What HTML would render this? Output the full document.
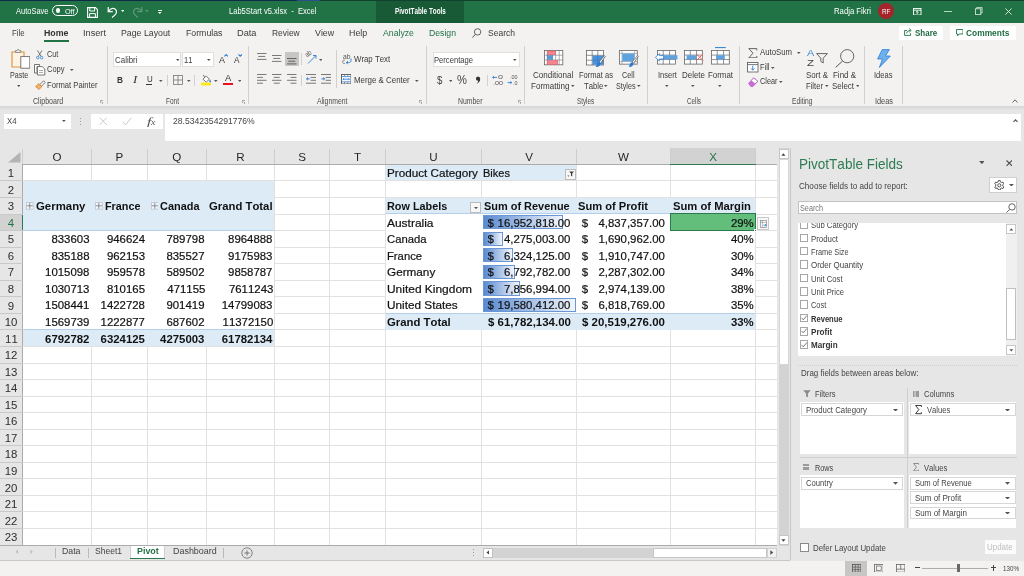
<!DOCTYPE html>
<html><head><meta charset="utf-8"><title>Excel</title>
<style>
html,body{margin:0;padding:0;}
body{width:1024px;height:576px;overflow:hidden;background:#e6e6e6;font-family:"Liberation Sans",sans-serif;position:relative;font-kerning:none;}
#r{position:absolute;left:0;top:0;width:1024px;height:576px;overflow:hidden;will-change:transform;}
#r div,#r svg{position:absolute;box-sizing:border-box;}
#r .t{white-space:pre;}
</style></head><body><div id="r">
<div style="left:22.5px;top:164.4px;width:754px;height:380.65px;background:#fff;"></div>
<div style="left:22.5px;top:180.45px;width:754px;height:1px;background:#e1e1e1;"></div>
<div style="left:22.5px;top:197px;width:754px;height:1px;background:#e1e1e1;"></div>
<div style="left:22.5px;top:213.55px;width:754px;height:1px;background:#e1e1e1;"></div>
<div style="left:22.5px;top:230.1px;width:754px;height:1px;background:#e1e1e1;"></div>
<div style="left:22.5px;top:246.65px;width:754px;height:1px;background:#e1e1e1;"></div>
<div style="left:22.5px;top:263.2px;width:754px;height:1px;background:#e1e1e1;"></div>
<div style="left:22.5px;top:279.75px;width:754px;height:1px;background:#e1e1e1;"></div>
<div style="left:22.5px;top:296.3px;width:754px;height:1px;background:#e1e1e1;"></div>
<div style="left:22.5px;top:312.85px;width:754px;height:1px;background:#e1e1e1;"></div>
<div style="left:22.5px;top:329.4px;width:754px;height:1px;background:#e1e1e1;"></div>
<div style="left:22.5px;top:345.95px;width:754px;height:1px;background:#e1e1e1;"></div>
<div style="left:22.5px;top:362.5px;width:754px;height:1px;background:#e1e1e1;"></div>
<div style="left:22.5px;top:379.05px;width:754px;height:1px;background:#e1e1e1;"></div>
<div style="left:22.5px;top:395.6px;width:754px;height:1px;background:#e1e1e1;"></div>
<div style="left:22.5px;top:412.15px;width:754px;height:1px;background:#e1e1e1;"></div>
<div style="left:22.5px;top:428.7px;width:754px;height:1px;background:#e1e1e1;"></div>
<div style="left:22.5px;top:445.25px;width:754px;height:1px;background:#e1e1e1;"></div>
<div style="left:22.5px;top:461.8px;width:754px;height:1px;background:#e1e1e1;"></div>
<div style="left:22.5px;top:478.35px;width:754px;height:1px;background:#e1e1e1;"></div>
<div style="left:22.5px;top:494.9px;width:754px;height:1px;background:#e1e1e1;"></div>
<div style="left:22.5px;top:511.45px;width:754px;height:1px;background:#e1e1e1;"></div>
<div style="left:22.5px;top:528px;width:754px;height:1px;background:#e1e1e1;"></div>
<div style="left:22.5px;top:544.55px;width:754px;height:1px;background:#e1e1e1;"></div>
<div style="left:91px;top:164.4px;width:1px;height:380.65px;background:#e1e1e1;"></div>
<div style="left:146.5px;top:164.4px;width:1px;height:380.65px;background:#e1e1e1;"></div>
<div style="left:206px;top:164.4px;width:1px;height:380.65px;background:#e1e1e1;"></div>
<div style="left:274px;top:164.4px;width:1px;height:380.65px;background:#e1e1e1;"></div>
<div style="left:329.25px;top:164.4px;width:1px;height:380.65px;background:#e1e1e1;"></div>
<div style="left:385px;top:164.4px;width:1px;height:380.65px;background:#e1e1e1;"></div>
<div style="left:481px;top:164.4px;width:1px;height:380.65px;background:#e1e1e1;"></div>
<div style="left:576px;top:164.4px;width:1px;height:380.65px;background:#e1e1e1;"></div>
<div style="left:669.75px;top:164.4px;width:1px;height:380.65px;background:#e1e1e1;"></div>
<div style="left:755.25px;top:164.4px;width:1px;height:380.65px;background:#e1e1e1;"></div>
<div style="left:23px;top:181.45px;width:251px;height:49.15px;background:#ddebf7;"></div>
<div style="left:23px;top:229.85px;width:251px;height:1px;background:#b4cfea;"></div>
<div style="left:23px;top:230.85px;width:251px;height:99.05px;background:#fff;"></div>
<div style="left:23px;top:329.9px;width:251px;height:16.55px;background:#ddebf7;"></div>
<div style="left:23px;top:329.4px;width:251px;height:1px;background:#b4cfea;"></div>
<div style="left:386px;top:164.9px;width:190px;height:15.55px;background:#ddebf7;"></div>
<div style="left:386px;top:198px;width:369.25px;height:16.05px;background:#ddebf7;"></div>
<div style="left:386px;top:213.3px;width:369.25px;height:1px;background:#b4cfea;"></div>
<div style="left:386px;top:214.3px;width:369.25px;height:99.05px;background:#fff;"></div>
<div style="left:386px;top:313.35px;width:369.25px;height:16.55px;background:#ddebf7;"></div>
<div style="left:386px;top:312.85px;width:369.25px;height:1px;background:#b4cfea;"></div>
<div style="left:0px;top:148px;width:776.5px;height:16.4px;background:#e6e6e6;"></div>
<div style="left:670.25px;top:148px;width:85.5px;height:16.4px;background:#d2d2d2;"></div>
<div style="left:670.25px;top:163.5px;width:85.5px;height:1.35px;background:#2a7a4d;"></div>
<div style="left:0px;top:163.9px;width:670.25px;height:1px;background:#ababab;"></div>
<div style="left:755.75px;top:163.9px;width:20.75px;height:1px;background:#ababab;"></div>
<div style="left:22px;top:149px;width:1px;height:15px;background:#cdcdcd;"></div>
<div style="left:91px;top:149px;width:1px;height:15px;background:#cdcdcd;"></div>
<div style="left:146.5px;top:149px;width:1px;height:15px;background:#cdcdcd;"></div>
<div style="left:206px;top:149px;width:1px;height:15px;background:#cdcdcd;"></div>
<div style="left:274px;top:149px;width:1px;height:15px;background:#cdcdcd;"></div>
<div style="left:329.25px;top:149px;width:1px;height:15px;background:#cdcdcd;"></div>
<div style="left:385px;top:149px;width:1px;height:15px;background:#cdcdcd;"></div>
<div style="left:481px;top:149px;width:1px;height:15px;background:#cdcdcd;"></div>
<div style="left:576px;top:149px;width:1px;height:15px;background:#cdcdcd;"></div>
<div style="left:669.75px;top:149px;width:1px;height:15px;background:#cdcdcd;"></div>
<div style="left:755.25px;top:149px;width:1px;height:15px;background:#cdcdcd;"></div>
<div class="t" style="top:148.8px;height:16px;line-height:16px;font-size:11.6px;color:#262626;left:52.49px;">O</div>
<div class="t" style="top:148.8px;height:16px;line-height:16px;font-size:11.6px;color:#262626;left:115.38px;">P</div>
<div class="t" style="top:148.8px;height:16px;line-height:16px;font-size:11.6px;color:#262626;left:172.24px;">Q</div>
<div class="t" style="top:148.8px;height:16px;line-height:16px;font-size:11.6px;color:#262626;left:236.31px;">R</div>
<div class="t" style="top:148.8px;height:16px;line-height:16px;font-size:11.6px;color:#262626;left:298.26px;">S</div>
<div class="t" style="top:148.8px;height:16px;line-height:16px;font-size:11.6px;color:#262626;left:354.08px;">T</div>
<div class="t" style="top:148.8px;height:16px;line-height:16px;font-size:11.6px;color:#262626;left:429.31px;">U</div>
<div class="t" style="top:148.8px;height:16px;line-height:16px;font-size:11.6px;color:#262626;left:525.13px;">V</div>
<div class="t" style="top:148.8px;height:16px;line-height:16px;font-size:11.6px;color:#262626;left:617.9px;">W</div>
<div class="t" style="top:148.8px;height:16px;line-height:16px;font-size:11.6px;color:#217346;left:709.13px;">X</div>
<svg style="left:8px;top:152px;" width="12.5" height="10.5" viewBox="0 0 12.5 10.5"><path d="M12.5 0V10.5H0Z" fill="#b4b4b4"/></svg>
<div style="left:0px;top:164.4px;width:22.5px;height:380.65px;background:#e6e6e6;"></div>
<div style="left:0px;top:214.05px;width:22.5px;height:16.55px;background:#d2d2d2;"></div>
<div style="left:22px;top:164.4px;width:1px;height:380.65px;background:#ababab;"></div>
<div style="left:21.6px;top:214.05px;width:1.2px;height:16.55px;background:#2a7a4d;"></div>
<div class="t" style="top:165.1px;height:16px;line-height:16px;font-size:11.4px;color:#2e2e2e;left:7.83px;">1</div>
<div style="left:0px;top:180.45px;width:22.5px;height:1px;background:#c9c9c9;"></div>
<div class="t" style="top:181.65px;height:16px;line-height:16px;font-size:11.4px;color:#2e2e2e;left:7.83px;">2</div>
<div style="left:0px;top:197px;width:22.5px;height:1px;background:#c9c9c9;"></div>
<div class="t" style="top:198.2px;height:16px;line-height:16px;font-size:11.4px;color:#2e2e2e;left:7.83px;">3</div>
<div style="left:0px;top:213.55px;width:22.5px;height:1px;background:#c9c9c9;"></div>
<div class="t" style="top:214.75px;height:16px;line-height:16px;font-size:11.4px;color:#217346;left:7.83px;">4</div>
<div style="left:0px;top:230.1px;width:22.5px;height:1px;background:#c9c9c9;"></div>
<div class="t" style="top:231.3px;height:16px;line-height:16px;font-size:11.4px;color:#2e2e2e;left:7.83px;">5</div>
<div style="left:0px;top:246.65px;width:22.5px;height:1px;background:#c9c9c9;"></div>
<div class="t" style="top:247.85px;height:16px;line-height:16px;font-size:11.4px;color:#2e2e2e;left:7.83px;">6</div>
<div style="left:0px;top:263.2px;width:22.5px;height:1px;background:#c9c9c9;"></div>
<div class="t" style="top:264.4px;height:16px;line-height:16px;font-size:11.4px;color:#2e2e2e;left:7.83px;">7</div>
<div style="left:0px;top:279.75px;width:22.5px;height:1px;background:#c9c9c9;"></div>
<div class="t" style="top:280.95px;height:16px;line-height:16px;font-size:11.4px;color:#2e2e2e;left:7.83px;">8</div>
<div style="left:0px;top:296.3px;width:22.5px;height:1px;background:#c9c9c9;"></div>
<div class="t" style="top:297.5px;height:16px;line-height:16px;font-size:11.4px;color:#2e2e2e;left:7.83px;">9</div>
<div style="left:0px;top:312.85px;width:22.5px;height:1px;background:#c9c9c9;"></div>
<div class="t" style="top:314.05px;height:16px;line-height:16px;font-size:11.4px;color:#2e2e2e;left:4.66px;">10</div>
<div style="left:0px;top:329.4px;width:22.5px;height:1px;background:#c9c9c9;"></div>
<div class="t" style="top:330.6px;height:16px;line-height:16px;font-size:11.4px;color:#2e2e2e;left:5.08px;">11</div>
<div style="left:0px;top:345.95px;width:22.5px;height:1px;background:#c9c9c9;"></div>
<div class="t" style="top:347.15px;height:16px;line-height:16px;font-size:11.4px;color:#2e2e2e;left:4.66px;">12</div>
<div style="left:0px;top:362.5px;width:22.5px;height:1px;background:#c9c9c9;"></div>
<div class="t" style="top:363.7px;height:16px;line-height:16px;font-size:11.4px;color:#2e2e2e;left:4.66px;">13</div>
<div style="left:0px;top:379.05px;width:22.5px;height:1px;background:#c9c9c9;"></div>
<div class="t" style="top:380.25px;height:16px;line-height:16px;font-size:11.4px;color:#2e2e2e;left:4.66px;">14</div>
<div style="left:0px;top:395.6px;width:22.5px;height:1px;background:#c9c9c9;"></div>
<div class="t" style="top:396.8px;height:16px;line-height:16px;font-size:11.4px;color:#2e2e2e;left:4.66px;">15</div>
<div style="left:0px;top:412.15px;width:22.5px;height:1px;background:#c9c9c9;"></div>
<div class="t" style="top:413.35px;height:16px;line-height:16px;font-size:11.4px;color:#2e2e2e;left:4.66px;">16</div>
<div style="left:0px;top:428.7px;width:22.5px;height:1px;background:#c9c9c9;"></div>
<div class="t" style="top:429.9px;height:16px;line-height:16px;font-size:11.4px;color:#2e2e2e;left:4.66px;">17</div>
<div style="left:0px;top:445.25px;width:22.5px;height:1px;background:#c9c9c9;"></div>
<div class="t" style="top:446.45px;height:16px;line-height:16px;font-size:11.4px;color:#2e2e2e;left:4.66px;">18</div>
<div style="left:0px;top:461.8px;width:22.5px;height:1px;background:#c9c9c9;"></div>
<div class="t" style="top:463px;height:16px;line-height:16px;font-size:11.4px;color:#2e2e2e;left:4.66px;">19</div>
<div style="left:0px;top:478.35px;width:22.5px;height:1px;background:#c9c9c9;"></div>
<div class="t" style="top:479.55px;height:16px;line-height:16px;font-size:11.4px;color:#2e2e2e;left:4.66px;">20</div>
<div style="left:0px;top:494.9px;width:22.5px;height:1px;background:#c9c9c9;"></div>
<div class="t" style="top:496.1px;height:16px;line-height:16px;font-size:11.4px;color:#2e2e2e;left:4.66px;">21</div>
<div style="left:0px;top:511.45px;width:22.5px;height:1px;background:#c9c9c9;"></div>
<div class="t" style="top:512.65px;height:16px;line-height:16px;font-size:11.4px;color:#2e2e2e;left:4.66px;">22</div>
<div style="left:0px;top:528px;width:22.5px;height:1px;background:#c9c9c9;"></div>
<div class="t" style="top:529.2px;height:16px;line-height:16px;font-size:11.4px;color:#2e2e2e;left:4.66px;">23</div>
<svg style="left:26.1px;top:202.4px;" width="7.6" height="7.6" viewBox="0 0 7.6 7.6"><rect x="0.4" y="0.4" width="6.8" height="6.8" fill="#f4f6f9" stroke="#bfc5cc" stroke-width="0.8"/><path d="M0.8 3.8H6.8M3.8 0.8V6.8" stroke="#7d838a" stroke-width="0.9"/></svg>
<svg style="left:95.1px;top:202.4px;" width="7.6" height="7.6" viewBox="0 0 7.6 7.6"><rect x="0.4" y="0.4" width="6.8" height="6.8" fill="#f4f6f9" stroke="#bfc5cc" stroke-width="0.8"/><path d="M0.8 3.8H6.8M3.8 0.8V6.8" stroke="#7d838a" stroke-width="0.9"/></svg>
<svg style="left:150.6px;top:202.4px;" width="7.6" height="7.6" viewBox="0 0 7.6 7.6"><rect x="0.4" y="0.4" width="6.8" height="6.8" fill="#f4f6f9" stroke="#bfc5cc" stroke-width="0.8"/><path d="M0.8 3.8H6.8M3.8 0.8V6.8" stroke="#7d838a" stroke-width="0.9"/></svg>
<div class="t" style="top:198.1px;height:16px;line-height:16px;font-size:11.4px;color:#111;font-weight:bold;left:35.5px;transform-origin:0 50%;transform:scaleX(1.0015);">Germany</div>
<div class="t" style="top:198.1px;height:16px;line-height:16px;font-size:11.4px;color:#111;font-weight:bold;left:104.5px;transform-origin:0 50%;transform:scaleX(0.9496);">France</div>
<div class="t" style="top:198.1px;height:16px;line-height:16px;font-size:11.4px;color:#111;font-weight:bold;left:160px;transform-origin:0 50%;transform:scaleX(0.9592);">Canada</div>
<div class="t" style="top:198.1px;height:16px;line-height:16px;font-size:11.4px;color:#111;font-weight:bold;left:208.75px;transform-origin:0 50%;transform:scaleX(0.9941);">Grand Total</div>
<div class="t" style="top:231.2px;height:16px;line-height:16px;font-size:11.4px;color:#111;left:51.46px;-webkit-text-stroke:0.2px #111;">833603</div>
<div class="t" style="top:231.2px;height:16px;line-height:16px;font-size:11.4px;color:#111;left:106.96px;-webkit-text-stroke:0.2px #111;">946624</div>
<div class="t" style="top:231.2px;height:16px;line-height:16px;font-size:11.4px;color:#111;left:166.46px;-webkit-text-stroke:0.2px #111;">789798</div>
<div class="t" style="top:231.2px;height:16px;line-height:16px;font-size:11.4px;color:#111;left:228.12px;-webkit-text-stroke:0.2px #111;">8964888</div>
<div class="t" style="top:247.75px;height:16px;line-height:16px;font-size:11.4px;color:#111;left:51.46px;-webkit-text-stroke:0.2px #111;">835188</div>
<div class="t" style="top:247.75px;height:16px;line-height:16px;font-size:11.4px;color:#111;left:106.96px;-webkit-text-stroke:0.2px #111;">962153</div>
<div class="t" style="top:247.75px;height:16px;line-height:16px;font-size:11.4px;color:#111;left:166.46px;-webkit-text-stroke:0.2px #111;">835527</div>
<div class="t" style="top:247.75px;height:16px;line-height:16px;font-size:11.4px;color:#111;left:228.12px;-webkit-text-stroke:0.2px #111;">9175983</div>
<div class="t" style="top:264.3px;height:16px;line-height:16px;font-size:11.4px;color:#111;left:45.12px;-webkit-text-stroke:0.2px #111;">1015098</div>
<div class="t" style="top:264.3px;height:16px;line-height:16px;font-size:11.4px;color:#111;left:106.96px;-webkit-text-stroke:0.2px #111;">959578</div>
<div class="t" style="top:264.3px;height:16px;line-height:16px;font-size:11.4px;color:#111;left:166.46px;-webkit-text-stroke:0.2px #111;">589502</div>
<div class="t" style="top:264.3px;height:16px;line-height:16px;font-size:11.4px;color:#111;left:228.12px;-webkit-text-stroke:0.2px #111;">9858787</div>
<div class="t" style="top:280.85px;height:16px;line-height:16px;font-size:11.4px;color:#111;left:45.12px;-webkit-text-stroke:0.2px #111;">1030713</div>
<div class="t" style="top:280.85px;height:16px;line-height:16px;font-size:11.4px;color:#111;left:106.96px;-webkit-text-stroke:0.2px #111;">810165</div>
<div class="t" style="top:280.85px;height:16px;line-height:16px;font-size:11.4px;color:#111;left:167.31px;-webkit-text-stroke:0.2px #111;">471155</div>
<div class="t" style="top:280.85px;height:16px;line-height:16px;font-size:11.4px;color:#111;left:228.96px;-webkit-text-stroke:0.2px #111;">7611243</div>
<div class="t" style="top:297.4px;height:16px;line-height:16px;font-size:11.4px;color:#111;left:45.12px;-webkit-text-stroke:0.2px #111;">1508441</div>
<div class="t" style="top:297.4px;height:16px;line-height:16px;font-size:11.4px;color:#111;left:100.62px;-webkit-text-stroke:0.2px #111;">1422728</div>
<div class="t" style="top:297.4px;height:16px;line-height:16px;font-size:11.4px;color:#111;left:166.46px;-webkit-text-stroke:0.2px #111;">901419</div>
<div class="t" style="top:297.4px;height:16px;line-height:16px;font-size:11.4px;color:#111;left:221.78px;-webkit-text-stroke:0.2px #111;">14799083</div>
<div class="t" style="top:313.95px;height:16px;line-height:16px;font-size:11.4px;color:#111;left:45.12px;-webkit-text-stroke:0.2px #111;">1569739</div>
<div class="t" style="top:313.95px;height:16px;line-height:16px;font-size:11.4px;color:#111;left:100.62px;-webkit-text-stroke:0.2px #111;">1222877</div>
<div class="t" style="top:313.95px;height:16px;line-height:16px;font-size:11.4px;color:#111;left:166.46px;-webkit-text-stroke:0.2px #111;">687602</div>
<div class="t" style="top:313.95px;height:16px;line-height:16px;font-size:11.4px;color:#111;left:222.62px;-webkit-text-stroke:0.2px #111;">11372150</div>
<div class="t" style="top:330.5px;height:16px;line-height:16px;font-size:11.4px;color:#111;font-weight:bold;left:45.12px;">6792782</div>
<div class="t" style="top:330.5px;height:16px;line-height:16px;font-size:11.4px;color:#111;font-weight:bold;left:100.62px;">6324125</div>
<div class="t" style="top:330.5px;height:16px;line-height:16px;font-size:11.4px;color:#111;font-weight:bold;left:160.12px;">4275003</div>
<div class="t" style="top:330.5px;height:16px;line-height:16px;font-size:11.4px;color:#111;font-weight:bold;left:221.78px;">61782134</div>
<div class="t" style="top:165px;height:16px;line-height:16px;font-size:11.4px;color:#111;left:386.8px;transform-origin:0 50%;transform:scaleX(1.0258);-webkit-text-stroke:0.2px #111;">Product Category</div>
<div class="t" style="top:165px;height:16px;line-height:16px;font-size:11.4px;color:#111;left:483.2px;transform-origin:0 50%;transform:scaleX(0.9685);-webkit-text-stroke:0.2px #111;">Bikes</div>
<div style="left:565px;top:169px;width:10.75px;height:11px;background:#f7f7f7;border:0.75px solid #bcbcbc;"></div>
<svg style="left:567px;top:171.2px;" width="7.5" height="6.5" viewBox="0 0 7.5 6.5"><path d="M2.2 0.4H7L5.2 2.6V5.6L4 4.8V2.6Z" fill="#3c3c3c"/><path d="M0.3 4.4H2.5L1.4 5.7Z" fill="#555"/></svg>
<div class="t" style="top:198.1px;height:16px;line-height:16px;font-size:11.4px;color:#111;font-weight:bold;left:386.8px;transform-origin:0 50%;transform:scaleX(0.9535);">Row Labels</div>
<div style="left:470.25px;top:201.9px;width:11px;height:11.1px;background:#f7f7f7;border:0.75px solid #bcbcbc;"></div>
<svg style="left:473.8px;top:206.5px;" width="4" height="2.2" viewBox="0 0 4 2.2"><path d="M0 0H4L2 2.2Z" fill="#555"/></svg>
<div class="t" style="top:198.1px;height:16px;line-height:16px;font-size:11.4px;color:#111;font-weight:bold;left:483.75px;transform-origin:0 50%;transform:scaleX(0.9600);">Sum of Revenue</div>
<div class="t" style="top:198.1px;height:16px;line-height:16px;font-size:11.4px;color:#111;font-weight:bold;left:578.25px;transform-origin:0 50%;transform:scaleX(0.9782);">Sum of Profit</div>
<div class="t" style="top:198.1px;height:16px;line-height:16px;font-size:11.4px;color:#111;font-weight:bold;left:672.5px;transform-origin:0 50%;transform:scaleX(0.9853);">Sum of Margin</div>
<div style="left:669.75px;top:213.45px;width:86.6px;height:17.55px;background:#63be7b;border:1.2px solid #2a7a4d;"></div>
<div style="left:754.25px;top:229.35px;width:3px;height:2.75px;background:#2a7a4d;border:0.6px solid #fff;"></div>
<div class="t" style="top:214.65px;height:16px;line-height:16px;font-size:11.4px;color:#111;left:386.9px;transform-origin:0 50%;transform:scaleX(1.0495);-webkit-text-stroke:0.2px #111;">Australia</div>
<div style="left:482.5px;top:215.05px;width:80.74px;height:14.25px;background:linear-gradient(90deg,#5a8ad0 0%,#7fa5dc 25%,#f2f6fc 100%);border:0.75px solid #6a96d6;"></div>
<div class="t" style="top:214.65px;height:16px;line-height:16px;font-size:11.4px;color:#111;left:487.5px;-webkit-text-stroke:0.2px #111;">$</div>
<div class="t" style="top:214.65px;height:16px;line-height:16px;font-size:11.4px;color:#111;left:497.6px;-webkit-text-stroke:0.2px #111;">16,952,818.00</div>
<div class="t" style="top:214.65px;height:16px;line-height:16px;font-size:11.4px;color:#111;left:581.75px;-webkit-text-stroke:0.2px #111;">$</div>
<div class="t" style="top:214.65px;height:16px;line-height:16px;font-size:11.4px;color:#111;left:598.44px;-webkit-text-stroke:0.2px #111;">4,837,357.00</div>
<div class="t" style="top:214.65px;height:16px;line-height:16px;font-size:11.4px;color:#111;left:730.93px;-webkit-text-stroke:0.2px #111;">29%</div>
<div class="t" style="top:231.2px;height:16px;line-height:16px;font-size:11.4px;color:#111;left:386.9px;transform-origin:0 50%;transform:scaleX(0.9904);-webkit-text-stroke:0.2px #111;">Canada</div>
<div style="left:482.5px;top:231.6px;width:20.36px;height:14.25px;background:linear-gradient(90deg,#5a8ad0 0%,#7fa5dc 25%,#f2f6fc 100%);border:0.75px solid #6a96d6;"></div>
<div class="t" style="top:231.2px;height:16px;line-height:16px;font-size:11.4px;color:#111;left:487.5px;-webkit-text-stroke:0.2px #111;">$</div>
<div class="t" style="top:231.2px;height:16px;line-height:16px;font-size:11.4px;color:#111;left:503.94px;-webkit-text-stroke:0.2px #111;">4,275,003.00</div>
<div class="t" style="top:231.2px;height:16px;line-height:16px;font-size:11.4px;color:#111;left:581.75px;-webkit-text-stroke:0.2px #111;">$</div>
<div class="t" style="top:231.2px;height:16px;line-height:16px;font-size:11.4px;color:#111;left:598.44px;-webkit-text-stroke:0.2px #111;">1,690,962.00</div>
<div class="t" style="top:231.2px;height:16px;line-height:16px;font-size:11.4px;color:#111;left:730.93px;-webkit-text-stroke:0.2px #111;">40%</div>
<div class="t" style="top:247.75px;height:16px;line-height:16px;font-size:11.4px;color:#111;left:386.9px;transform-origin:0 50%;transform:scaleX(0.9879);-webkit-text-stroke:0.2px #111;">France</div>
<div style="left:482.5px;top:248.15px;width:30.12px;height:14.25px;background:linear-gradient(90deg,#5a8ad0 0%,#7fa5dc 25%,#f2f6fc 100%);border:0.75px solid #6a96d6;"></div>
<div class="t" style="top:247.75px;height:16px;line-height:16px;font-size:11.4px;color:#111;left:487.5px;-webkit-text-stroke:0.2px #111;">$</div>
<div class="t" style="top:247.75px;height:16px;line-height:16px;font-size:11.4px;color:#111;left:503.94px;-webkit-text-stroke:0.2px #111;">6,324,125.00</div>
<div class="t" style="top:247.75px;height:16px;line-height:16px;font-size:11.4px;color:#111;left:581.75px;-webkit-text-stroke:0.2px #111;">$</div>
<div class="t" style="top:247.75px;height:16px;line-height:16px;font-size:11.4px;color:#111;left:598.44px;-webkit-text-stroke:0.2px #111;">1,910,747.00</div>
<div class="t" style="top:247.75px;height:16px;line-height:16px;font-size:11.4px;color:#111;left:730.93px;-webkit-text-stroke:0.2px #111;">30%</div>
<div class="t" style="top:264.3px;height:16px;line-height:16px;font-size:11.4px;color:#111;left:386.9px;transform-origin:0 50%;transform:scaleX(1.0303);-webkit-text-stroke:0.2px #111;">Germany</div>
<div style="left:482.5px;top:264.7px;width:32.35px;height:14.25px;background:linear-gradient(90deg,#5a8ad0 0%,#7fa5dc 25%,#f2f6fc 100%);border:0.75px solid #6a96d6;"></div>
<div class="t" style="top:264.3px;height:16px;line-height:16px;font-size:11.4px;color:#111;left:487.5px;-webkit-text-stroke:0.2px #111;">$</div>
<div class="t" style="top:264.3px;height:16px;line-height:16px;font-size:11.4px;color:#111;left:503.94px;-webkit-text-stroke:0.2px #111;">6,792,782.00</div>
<div class="t" style="top:264.3px;height:16px;line-height:16px;font-size:11.4px;color:#111;left:581.75px;-webkit-text-stroke:0.2px #111;">$</div>
<div class="t" style="top:264.3px;height:16px;line-height:16px;font-size:11.4px;color:#111;left:598.44px;-webkit-text-stroke:0.2px #111;">2,287,302.00</div>
<div class="t" style="top:264.3px;height:16px;line-height:16px;font-size:11.4px;color:#111;left:730.93px;-webkit-text-stroke:0.2px #111;">34%</div>
<div class="t" style="top:280.85px;height:16px;line-height:16px;font-size:11.4px;color:#111;left:386.9px;transform-origin:0 50%;transform:scaleX(1.0485);-webkit-text-stroke:0.2px #111;">United Kingdom</div>
<div style="left:482.5px;top:281.25px;width:37.42px;height:14.25px;background:linear-gradient(90deg,#5a8ad0 0%,#7fa5dc 25%,#f2f6fc 100%);border:0.75px solid #6a96d6;"></div>
<div class="t" style="top:280.85px;height:16px;line-height:16px;font-size:11.4px;color:#111;left:487.5px;-webkit-text-stroke:0.2px #111;">$</div>
<div class="t" style="top:280.85px;height:16px;line-height:16px;font-size:11.4px;color:#111;left:503.94px;-webkit-text-stroke:0.2px #111;">7,856,994.00</div>
<div class="t" style="top:280.85px;height:16px;line-height:16px;font-size:11.4px;color:#111;left:581.75px;-webkit-text-stroke:0.2px #111;">$</div>
<div class="t" style="top:280.85px;height:16px;line-height:16px;font-size:11.4px;color:#111;left:598.44px;-webkit-text-stroke:0.2px #111;">2,974,139.00</div>
<div class="t" style="top:280.85px;height:16px;line-height:16px;font-size:11.4px;color:#111;left:730.93px;-webkit-text-stroke:0.2px #111;">38%</div>
<div class="t" style="top:297.4px;height:16px;line-height:16px;font-size:11.4px;color:#111;left:386.9px;transform-origin:0 50%;transform:scaleX(1.0345);-webkit-text-stroke:0.2px #111;">United States</div>
<div style="left:482.5px;top:297.8px;width:93.25px;height:14.25px;background:linear-gradient(90deg,#5a8ad0 0%,#7fa5dc 25%,#f2f6fc 100%);border:0.75px solid #6a96d6;"></div>
<div class="t" style="top:297.4px;height:16px;line-height:16px;font-size:11.4px;color:#111;left:487.5px;-webkit-text-stroke:0.2px #111;">$</div>
<div class="t" style="top:297.4px;height:16px;line-height:16px;font-size:11.4px;color:#111;left:497.6px;-webkit-text-stroke:0.2px #111;">19,580,412.00</div>
<div class="t" style="top:297.4px;height:16px;line-height:16px;font-size:11.4px;color:#111;left:581.75px;-webkit-text-stroke:0.2px #111;">$</div>
<div class="t" style="top:297.4px;height:16px;line-height:16px;font-size:11.4px;color:#111;left:598.44px;-webkit-text-stroke:0.2px #111;">6,818,769.00</div>
<div class="t" style="top:297.4px;height:16px;line-height:16px;font-size:11.4px;color:#111;left:730.93px;-webkit-text-stroke:0.2px #111;">35%</div>
<div class="t" style="top:313.95px;height:16px;line-height:16px;font-size:11.4px;color:#111;font-weight:bold;left:386.8px;transform-origin:0 50%;transform:scaleX(0.9965);">Grand Total</div>
<div class="t" style="top:313.95px;height:16px;line-height:16px;font-size:11.4px;color:#111;font-weight:bold;left:487.5px;transform-origin:0 50%;transform:scaleX(1.0071);">$ 61,782,134.00</div>
<div class="t" style="top:313.95px;height:16px;line-height:16px;font-size:11.4px;color:#111;font-weight:bold;left:582px;transform-origin:0 50%;transform:scaleX(1.0071);">$ 20,519,276.00</div>
<div class="t" style="top:313.95px;height:16px;line-height:16px;font-size:11.4px;color:#111;font-weight:bold;left:730.93px;">33%</div>
<div style="left:757px;top:217.3px;width:12.2px;height:13px;background:#f8f8f8;border:0.75px solid #c8c8c8;"></div>
<svg style="left:759.6px;top:219.6px;" width="7.5" height="8.5" viewBox="0 0 7.5 8.5"><rect x="0.4" y="0.4" width="6" height="7" fill="#fff" stroke="#8c8c8c" stroke-width="0.7"/><path d="M0.4 2.4H6.4M2.4 0.4V7.4" stroke="#8c8c8c" stroke-width="0.6"/><path d="M3.4 5.2H6M5 4L6.2 5.2L5 6.4" stroke="#2b7cd3" stroke-width="0.8" fill="none"/></svg>
<div style="left:0px;top:0px;width:1024px;height:22.5px;background:#217346;"></div>
<div style="left:0px;top:0px;width:1024px;height:1.2px;background:linear-gradient(90deg,#0f2a44 0,#0f2a44 296px,#2c4f8e 298px,#2c4f8e 319px,#12402f 321px,#12402f 100%);"></div>
<div style="left:375.5px;top:1.25px;width:88.5px;height:21.25px;background:#185a36;"></div>
<div class="t" style="top:4.8px;height:13px;line-height:13px;font-size:9.2px;color:#fff;left:15.5px;transform-origin:0 50%;transform:scaleX(0.8146);">AutoSave</div>
<div style="left:52.2px;top:5.2px;width:25.5px;height:11.2px;background:transparent;border:1px solid #fff;border-radius:6px;"></div>
<div style="left:55.6px;top:8.4px;width:4.8px;height:4.8px;background:#fff;border-radius:3px;"></div>
<div class="t" style="top:5.5px;height:11px;line-height:11px;font-size:8px;color:#fff;left:64.5px;transform-origin:0 50%;transform:scaleX(0.9028);">Off</div>
<svg style="left:87px;top:6.5px;" width="11" height="11" viewBox="0 0 11 11"><path d="M0.6 0.6H8.4L10.4 2.6V10.4H0.6Z" fill="none" stroke="#fff" stroke-width="1.1"/><path d="M2.8 0.8V4H7.6V0.8M2.6 10.2V6.6H8.4V10.2" fill="none" stroke="#fff" stroke-width="1"/></svg>
<svg style="left:107px;top:5.5px;" width="11" height="12" viewBox="0 0 11 12"><path d="M1.2 1V5.6H5.8" fill="none" stroke="#fff" stroke-width="1.2"/><path d="M1.6 5.2C3.6 1.6 8 1.4 9.3 4.6C10.2 7.2 8 9.4 5 11.4" fill="none" stroke="#fff" stroke-width="1.2"/></svg>
<svg style="left:120.7px;top:9.8px;" width="3.6" height="2" viewBox="0 0 3.6 2"><path d="M0 0H3.6L1.8 2Z" fill="#fff"/></svg>
<svg style="left:132px;top:5.5px;" width="11" height="12" viewBox="0 0 11 12"><path d="M9.8 1V5.6H5.2" fill="none" stroke="#5f9a7c" stroke-width="1.2"/><path d="M9.4 5.2C7.4 1.6 3 1.4 1.7 4.6C0.8 7.2 3 9.4 6 11.4" fill="none" stroke="#5f9a7c" stroke-width="1.2"/></svg>
<svg style="left:145.2px;top:9.8px;" width="3.6" height="2" viewBox="0 0 3.6 2"><path d="M0 0H3.6L1.8 2Z" fill="#5f9a7c"/></svg>
<div style="left:158.25px;top:10px;width:3.6px;height:0.9px;background:#fff;"></div>
<svg style="left:158.2px;top:11.8px;" width="3.6" height="2" viewBox="0 0 3.6 2"><path d="M0 0H3.6L1.8 2Z" fill="#fff"/></svg>
<div class="t" style="top:4.8px;height:13px;line-height:13px;font-size:9.2px;color:#fff;left:228.5px;transform-origin:0 50%;transform:scaleX(0.8227);">Lab5Start v5.xlsx  -  Excel</div>
<div class="t" style="top:5.8px;height:11px;line-height:11px;font-size:8.2px;color:#fff;font-weight:bold;left:394.75px;transform-origin:0 50%;transform:scaleX(0.7765);">PivotTable Tools</div>
<div class="t" style="top:5px;height:13px;line-height:13px;font-size:9.2px;color:#fff;left:834px;transform-origin:0 50%;transform:scaleX(0.8416);">Radja Fikri</div>
<div style="left:878px;top:3px;width:16px;height:16px;background:#a4262c;border-radius:8px;"></div>
<div class="t" style="top:6.9px;height:9px;line-height:9px;font-size:6.6px;color:#fff;left:882px;transform-origin:0 50%;transform:scaleX(0.9661);">RF</div>
<svg style="left:913px;top:7.5px;" width="8.5" height="7.5" viewBox="0 0 8.5 7.5"><rect x="0.5" y="0.5" width="7.5" height="6.5" fill="none" stroke="#fff" stroke-width="0.9"/><path d="M0.5 2.2H8" stroke="#fff" stroke-width="0.9"/><path d="M4.25 6V3.2M2.9 4.4L4.25 3.1L5.6 4.4" stroke="#fff" stroke-width="0.8" fill="none"/></svg>
<div style="left:944px;top:10.7px;width:8px;height:0.8px;background:#b9d3c5;"></div>
<svg style="left:975px;top:7px;" width="7.5" height="8" viewBox="0 0 7.5 8"><rect x="0.4" y="1.8" width="5.4" height="5.6" fill="none" stroke="#e4efe9" stroke-width="0.8"/><path d="M1.8 1.8V0.4H7V6H5.8" fill="none" stroke="#e4efe9" stroke-width="0.8"/></svg>
<svg style="left:1005px;top:7.5px;" width="7" height="7" viewBox="0 0 7 7"><path d="M0.4 0.4L6.6 6.6M6.6 0.4L0.4 6.6" stroke="#e8f1ec" stroke-width="0.85"/></svg>
<div style="left:0px;top:22.5px;width:1024px;height:83.5px;background:#f3f2f1;"></div>
<div style="left:0px;top:106px;width:1024px;height:3.5px;background:linear-gradient(180deg,#d6d6d6,#e6e6e6);"></div>
<div class="t" style="top:26.3px;height:14px;line-height:14px;font-size:9.7px;color:#3b3b3b;left:11.5px;transform-origin:0 50%;transform:scaleX(0.7997);">File</div>
<div class="t" style="top:26.3px;height:14px;line-height:14px;font-size:9.7px;color:#333;font-weight:bold;left:44px;transform-origin:0 50%;transform:scaleX(0.9091);">Home</div>
<div style="left:44px;top:40px;width:25px;height:1.75px;background:#217346;"></div>
<div class="t" style="top:26.3px;height:14px;line-height:14px;font-size:9.7px;color:#3b3b3b;left:83px;transform-origin:0 50%;transform:scaleX(0.9481);">Insert</div>
<div class="t" style="top:26.3px;height:14px;line-height:14px;font-size:9.7px;color:#3b3b3b;left:121px;transform-origin:0 50%;transform:scaleX(0.9041);">Page Layout</div>
<div class="t" style="top:26.3px;height:14px;line-height:14px;font-size:9.7px;color:#3b3b3b;left:185.5px;transform-origin:0 50%;transform:scaleX(0.9029);">Formulas</div>
<div class="t" style="top:26.3px;height:14px;line-height:14px;font-size:9.7px;color:#3b3b3b;left:237px;transform-origin:0 50%;transform:scaleX(0.9517);">Data</div>
<div class="t" style="top:26.3px;height:14px;line-height:14px;font-size:9.7px;color:#3b3b3b;left:271.5px;transform-origin:0 50%;transform:scaleX(0.8725);">Review</div>
<div class="t" style="top:26.3px;height:14px;line-height:14px;font-size:9.7px;color:#3b3b3b;left:315px;transform-origin:0 50%;transform:scaleX(0.9113);">View</div>
<div class="t" style="top:26.3px;height:14px;line-height:14px;font-size:9.7px;color:#3b3b3b;left:349px;transform-origin:0 50%;transform:scaleX(0.9148);">Help</div>
<div class="t" style="top:26.3px;height:14px;line-height:14px;font-size:9.7px;color:#217346;left:383px;transform-origin:0 50%;transform:scaleX(0.8983);">Analyze</div>
<div class="t" style="top:26.3px;height:14px;line-height:14px;font-size:9.7px;color:#217346;left:429px;transform-origin:0 50%;transform:scaleX(0.8942);">Design</div>
<svg style="left:472px;top:28px;" width="9.5" height="10" viewBox="0 0 9.5 10"><circle cx="5.6" cy="3.9" r="3.2" fill="none" stroke="#555" stroke-width="0.9"/><path d="M3.4 6.3L0.5 9.5" stroke="#555" stroke-width="1"/></svg>
<div class="t" style="top:26.3px;height:14px;line-height:14px;font-size:9.7px;color:#3b3b3b;left:488px;transform-origin:0 50%;transform:scaleX(0.8785);">Search</div>
<div style="left:899px;top:25.5px;width:44px;height:14.5px;background:#fff;"></div>
<svg style="left:904px;top:28px;" width="8.5" height="8" viewBox="0 0 8.5 8"><path d="M3 2.5H0.6V7.4H6.6V5.2" fill="none" stroke="#217346" stroke-width="0.9"/><path d="M2.6 5.4C3 3.4 4.6 2.4 6.4 2.4M5.2 0.6L7.2 2.4L5.2 4.2" fill="none" stroke="#217346" stroke-width="0.9"/></svg>
<div class="t" style="top:26.4px;height:13px;line-height:13px;font-size:9.4px;color:#1e6b41;font-weight:bold;left:915px;transform-origin:0 50%;transform:scaleX(0.8517);">Share</div>
<div style="left:950px;top:25.5px;width:65.5px;height:14.5px;background:#fff;"></div>
<svg style="left:955.5px;top:28.5px;" width="7.5" height="7.5" viewBox="0 0 7.5 7.5"><path d="M0.5 0.5H7V5H3L1.6 6.8V5H0.5Z" fill="none" stroke="#217346" stroke-width="0.9"/></svg>
<div class="t" style="top:26.4px;height:13px;line-height:13px;font-size:9.4px;color:#1e6b41;font-weight:bold;left:966px;transform-origin:0 50%;transform:scaleX(0.8955);">Comments</div>
<div style="left:107.1px;top:46px;width:0.9px;height:57.5px;background:#d2d0ce;"></div>
<div style="left:248.1px;top:46px;width:0.9px;height:57.5px;background:#d2d0ce;"></div>
<div style="left:425.6px;top:46px;width:0.9px;height:57.5px;background:#d2d0ce;"></div>
<div style="left:524.1px;top:46px;width:0.9px;height:57.5px;background:#d2d0ce;"></div>
<div style="left:647.1px;top:46px;width:0.9px;height:57.5px;background:#d2d0ce;"></div>
<div style="left:739.1px;top:46px;width:0.9px;height:57.5px;background:#d2d0ce;"></div>
<div style="left:863.6px;top:46px;width:0.9px;height:57.5px;background:#d2d0ce;"></div>
<div style="left:901.85px;top:46px;width:0.9px;height:57.5px;background:#d2d0ce;"></div>
<div class="t" style="top:95.2px;height:12px;line-height:12px;font-size:8.4px;color:#4a4a4a;left:33px;transform-origin:0 50%;transform:scaleX(0.8413);">Clipboard</div>
<div class="t" style="top:95.2px;height:12px;line-height:12px;font-size:8.4px;color:#4a4a4a;left:166px;transform-origin:0 50%;transform:scaleX(0.7734);">Font</div>
<div class="t" style="top:95.2px;height:12px;line-height:12px;font-size:8.4px;color:#4a4a4a;left:317px;transform-origin:0 50%;transform:scaleX(0.8165);">Alignment</div>
<div class="t" style="top:95.2px;height:12px;line-height:12px;font-size:8.4px;color:#4a4a4a;left:457.5px;transform-origin:0 50%;transform:scaleX(0.8201);">Number</div>
<div class="t" style="top:95.2px;height:12px;line-height:12px;font-size:8.4px;color:#4a4a4a;left:577px;transform-origin:0 50%;transform:scaleX(0.7541);">Styles</div>
<div class="t" style="top:95.2px;height:12px;line-height:12px;font-size:8.4px;color:#4a4a4a;left:687px;transform-origin:0 50%;transform:scaleX(0.7498);">Cells</div>
<div class="t" style="top:95.2px;height:12px;line-height:12px;font-size:8.4px;color:#4a4a4a;left:792px;transform-origin:0 50%;transform:scaleX(0.7982);">Editing</div>
<div class="t" style="top:95.2px;height:12px;line-height:12px;font-size:8.4px;color:#4a4a4a;left:875px;transform-origin:0 50%;transform:scaleX(0.8760);">Ideas</div>
<svg style="left:99.5px;top:100px;" width="3.8" height="3.8" viewBox="0 0 3.8 3.8"><path d="M0.4 3V0.4H3M1.6 1.6L3.4 3.4M3.4 1.8V3.4H1.8" fill="none" stroke="#777" stroke-width="0.6"/></svg>
<svg style="left:241.5px;top:100px;" width="3.8" height="3.8" viewBox="0 0 3.8 3.8"><path d="M0.4 3V0.4H3M1.6 1.6L3.4 3.4M3.4 1.8V3.4H1.8" fill="none" stroke="#777" stroke-width="0.6"/></svg>
<svg style="left:418.5px;top:100px;" width="3.8" height="3.8" viewBox="0 0 3.8 3.8"><path d="M0.4 3V0.4H3M1.6 1.6L3.4 3.4M3.4 1.8V3.4H1.8" fill="none" stroke="#777" stroke-width="0.6"/></svg>
<svg style="left:517.5px;top:100px;" width="3.8" height="3.8" viewBox="0 0 3.8 3.8"><path d="M0.4 3V0.4H3M1.6 1.6L3.4 3.4M3.4 1.8V3.4H1.8" fill="none" stroke="#777" stroke-width="0.6"/></svg>
<svg style="left:1012px;top:98.5px;" width="6" height="4" viewBox="0 0 6 4"><path d="M0.5 3.5L3 0.8L5.5 3.5" fill="none" stroke="#666" stroke-width="1"/></svg>
<svg style="left:10.5px;top:48.5px;" width="19.5" height="20" viewBox="0 0 19.5 20"><path d="M1 3H13V18H1Z" fill="#fdf3e4" stroke="#e19642" stroke-width="1.2"/><path d="M4.5 3.4V1.6H6C6 0.2 8.4 0.2 8.4 1.6H9.8V3.4Z" fill="#f3f2f1" stroke="#777" stroke-width="0.8"/><rect x="9.8" y="7.6" width="9" height="11.6" fill="#fff" stroke="#6a6a6a" stroke-width="0.9"/></svg>
<div class="t" style="top:68.5px;height:13px;line-height:13px;font-size:9px;color:#3b3b3b;left:9.5px;transform-origin:0 50%;transform:scaleX(0.7930);">Paste</div>
<svg style="left:16.7px;top:84.8px;" width="3.6" height="2" viewBox="0 0 3.6 2"><path d="M0 0H3.6L1.8 2Z" fill="#555"/></svg>
<svg style="left:36px;top:50px;" width="7.5" height="9.5" viewBox="0 0 7.5 9.5"><path d="M1.4 0.4L5 6.2M6 0.4L2.4 6.2" stroke="#555" stroke-width="0.8" fill="none"/><circle cx="1.8" cy="7.6" r="1.3" fill="none" stroke="#2b7cd3" stroke-width="0.8"/><circle cx="5.6" cy="7.6" r="1.3" fill="none" stroke="#2b7cd3" stroke-width="0.8"/></svg>
<div class="t" style="top:47.8px;height:13px;line-height:13px;font-size:9px;color:#3b3b3b;left:47px;transform-origin:0 50%;transform:scaleX(0.8033);">Cut</div>
<svg style="left:34px;top:64px;" width="11.5" height="11.5" viewBox="0 0 11.5 11.5"><path d="M0.5 0.5H5.5V2.5H3V9H0.5Z" fill="#fff" stroke="#555" stroke-width="0.8"/><path d="M3.4 2.6H8.2L10.8 5V11H3.4Z" fill="#fff" stroke="#555" stroke-width="0.8"/><path d="M5 6.5H9M5 8.5H9" stroke="#777" stroke-width="0.6"/></svg>
<div class="t" style="top:63.3px;height:13px;line-height:13px;font-size:9px;color:#3b3b3b;left:47px;transform-origin:0 50%;transform:scaleX(0.8329);">Copy</div>
<svg style="left:70.2px;top:68.8px;" width="3.6" height="2" viewBox="0 0 3.6 2"><path d="M0 0H3.6L1.8 2Z" fill="#555"/></svg>
<svg style="left:34.5px;top:79.5px;" width="11" height="10" viewBox="0 0 11 10"><path d="M4.6 4.8L8.6 0.8L10.2 2.4L6.2 6.4Z" fill="#fff" stroke="#555" stroke-width="0.8"/><path d="M0.6 6.6L3.8 3.6L6.8 6.6L4 9.6Z" fill="#f2b26a" stroke="#d9822b" stroke-width="0.8"/></svg>
<div class="t" style="top:78.5px;height:13px;line-height:13px;font-size:9px;color:#3b3b3b;left:47px;transform-origin:0 50%;transform:scaleX(0.8485);">Format Painter</div>
<div style="left:112.5px;top:51.9px;width:68.75px;height:14.7px;background:#fff;border:0.75px solid #e1dfdd;"></div>
<div style="left:181.75px;top:51.9px;width:31.75px;height:14.7px;background:#fff;border:0.75px solid #e1dfdd;"></div>
<div class="t" style="top:53.8px;height:13px;line-height:13px;font-size:9px;color:#3b3b3b;left:114.5px;transform-origin:0 50%;transform:scaleX(0.8821);">Calibri</div>
<svg style="left:175.7px;top:58.8px;" width="3.6" height="2" viewBox="0 0 3.6 2"><path d="M0 0H3.6L1.8 2Z" fill="#555"/></svg>
<div class="t" style="top:53.8px;height:13px;line-height:13px;font-size:9px;color:#3b3b3b;left:184px;transform-origin:0 50%;transform:scaleX(0.8295);">11</div>
<svg style="left:207.2px;top:58.8px;" width="3.6" height="2" viewBox="0 0 3.6 2"><path d="M0 0H3.6L1.8 2Z" fill="#555"/></svg>
<div class="t" style="top:53.3px;height:13px;line-height:13px;font-size:9.4px;color:#3b3b3b;left:218.5px;transform-origin:0 50%;transform:scaleX(0.9570);">A</div>
<svg style="left:223.6px;top:54px;" width="4.4" height="2.8" viewBox="0 0 4.4 2.8"><path d="M0.4 2.4L2.2 0.6L4 2.4" fill="none" stroke="#2b7cd3" stroke-width="1.1"/></svg>
<div class="t" style="top:54.2px;height:12px;line-height:12px;font-size:8.6px;color:#3b3b3b;left:233.5px;transform-origin:0 50%;transform:scaleX(0.9588);">A</div>
<svg style="left:238px;top:54px;" width="4.4" height="2.8" viewBox="0 0 4.4 2.8"><path d="M0.4 0.4L2.2 2.2L4 0.4" fill="none" stroke="#2b7cd3" stroke-width="1.1"/></svg>
<div class="t" style="top:72.5px;height:14px;line-height:14px;font-size:9.8px;color:#333;font-weight:bold;left:117.3px;transform-origin:0 50%;transform:scaleX(0.8407);">B</div>
<div class="t" style="top:72.5px;height:14px;line-height:14px;font-size:9.8px;color:#333;font-style:italic;font-family:'Liberation Serif',serif;left:132.5px;transform-origin:0 50%;transform:scaleX(1.3023);">I</div>
<div class="t" style="top:72.7px;height:13px;line-height:13px;font-size:9.2px;color:#333;left:146.5px;transform-origin:0 50%;transform:scaleX(0.8654);">U</div>
<div style="left:146.3px;top:83.9px;width:6.2px;height:0.8px;background:#333;"></div>
<svg style="left:159.2px;top:79.5px;" width="3.6" height="2" viewBox="0 0 3.6 2"><path d="M0 0H3.6L1.8 2Z" fill="#555"/></svg>
<div style="left:167.3px;top:74.5px;width:0.8px;height:11.5px;background:#d2d0ce;"></div>
<svg style="left:172.5px;top:75px;" width="10" height="10" viewBox="0 0 10 10"><rect x="0.5" y="0.5" width="9" height="9" fill="none" stroke="#777" stroke-width="0.8"/><path d="M5 0.5V9.5M0.5 5H9.5" stroke="#777" stroke-width="0.8"/></svg>
<svg style="left:187.2px;top:79.5px;" width="3.6" height="2" viewBox="0 0 3.6 2"><path d="M0 0H3.6L1.8 2Z" fill="#555"/></svg>
<div style="left:194.3px;top:74.5px;width:0.8px;height:11.5px;background:#d2d0ce;"></div>
<svg style="left:200.5px;top:74px;" width="10.5" height="11.5" viewBox="0 0 10.5 11.5"><path d="M2 5.2L5.2 2L8.4 5.2L5.2 8.2Z" fill="#fff" stroke="#555" stroke-width="0.8"/><path d="M3.6 3.6L2.4 0.8" stroke="#555" stroke-width="0.8"/><path d="M9 5.4C9 5.4 10 6.8 10 7.4A0.9 0.9 0 0 1 8.2 7.4C8.2 6.8 9 5.4 9 5.4Z" fill="#2b7cd3"/><rect x="0" y="8.6" width="10.5" height="2.9" fill="#ffe81a"/></svg>
<svg style="left:214.2px;top:79.5px;" width="3.6" height="2" viewBox="0 0 3.6 2"><path d="M0 0H3.6L1.8 2Z" fill="#555"/></svg>
<div class="t" style="top:71.5px;height:13px;line-height:13px;font-size:9px;color:#333;left:225px;transform-origin:0 50%;transform:scaleX(1.0411);">A</div>
<div style="left:223px;top:82.6px;width:10.2px;height:2.9px;background:#e81123;"></div>
<svg style="left:237.7px;top:79.5px;" width="3.6" height="2" viewBox="0 0 3.6 2"><path d="M0 0H3.6L1.8 2Z" fill="#555"/></svg>
<div style="left:284.5px;top:51.5px;width:14.75px;height:14.75px;background:#c8c6c4;"></div>
<svg style="left:257px;top:52.9px;" width="9.5" height="9.85" viewBox="0 0 9.5 9.85"><path d="M0 0.5H9.5" stroke="#6a6a6a" stroke-width="0.9"/><path d="M1.25 3.45H8.25" stroke="#6a6a6a" stroke-width="0.9"/><path d="M0 6.4H9.5" stroke="#6a6a6a" stroke-width="0.9"/></svg>
<svg style="left:272px;top:55px;" width="9.5" height="9.85" viewBox="0 0 9.5 9.85"><path d="M0 0.5H9.5" stroke="#6a6a6a" stroke-width="0.9"/><path d="M1.25 3.45H8.25" stroke="#6a6a6a" stroke-width="0.9"/><path d="M0 6.4H9.5" stroke="#6a6a6a" stroke-width="0.9"/></svg>
<svg style="left:287px;top:57.9px;" width="9.5" height="9.1" viewBox="0 0 9.5 9.1"><path d="M0 0.5H9.5" stroke="#555" stroke-width="0.9"/><path d="M1.25 3.2H8.25" stroke="#555" stroke-width="0.9"/><path d="M0 5.9H9.5" stroke="#555" stroke-width="0.9"/></svg>
<div style="left:301.1px;top:52.75px;width:0.8px;height:12.5px;background:#d2d0ce;"></div>
<svg style="left:306px;top:52.5px;" width="11.5" height="12" viewBox="0 0 11.5 12"><path d="M2 10.5L10 2.5M10 2.5H7M10 2.5V5.5" fill="none" stroke="#2b7cd3" stroke-width="0.9"/></svg>
<div class="t" style="top:51.4px;height:10px;line-height:10px;font-size:7px;color:#555;left:305.8px;transform-origin:0 50%;transform:scaleX(0.7963);transform:rotate(-40deg) scaleX(0.8);">ab</div>
<svg style="left:318.7px;top:58.8px;" width="3.6" height="2" viewBox="0 0 3.6 2"><path d="M0 0H3.6L1.8 2Z" fill="#555"/></svg>
<div style="left:335.6px;top:49.5px;width:0.8px;height:38px;background:#d2d0ce;"></div>
<svg style="left:342px;top:53.5px;" width="10.5" height="11.5" viewBox="0 0 10.5 11.5"><path d="M9 4.6V6.6C9 8 8 8.6 6.4 8.6H4.4M5.8 7.2L4.2 8.6L5.8 10" fill="none" stroke="#2b7cd3" stroke-width="0.95"/><path d="M2.8 6.2C1.6 5.8 0.6 6.6 0.6 7.8C0.6 9.2 1.8 9.8 2.9 9.3" fill="none" stroke="#666" stroke-width="0.8"/></svg>
<div class="t" style="top:51.5px;height:9px;line-height:9px;font-size:6.4px;color:#555;left:343px;transform-origin:0 50%;transform:scaleX(1.0535);">ab</div>
<div class="t" style="top:53.1px;height:13px;line-height:13px;font-size:9px;color:#3b3b3b;left:353.75px;transform-origin:0 50%;transform:scaleX(0.8710);">Wrap Text</div>
<svg style="left:257px;top:74.1px;" width="9.5" height="12.6" viewBox="0 0 9.5 12.6"><path d="M0 0.5H9.5" stroke="#6a6a6a" stroke-width="0.9"/><path d="M0 3.4H6" stroke="#6a6a6a" stroke-width="0.9"/><path d="M0 6.3H9.5" stroke="#6a6a6a" stroke-width="0.9"/><path d="M0 9.2H6" stroke="#6a6a6a" stroke-width="0.9"/></svg>
<svg style="left:272px;top:74.1px;" width="9.5" height="12.6" viewBox="0 0 9.5 12.6"><path d="M0 0.5H9.5" stroke="#6a6a6a" stroke-width="0.9"/><path d="M1.75 3.4H7.75" stroke="#6a6a6a" stroke-width="0.9"/><path d="M0 6.3H9.5" stroke="#6a6a6a" stroke-width="0.9"/><path d="M1.75 9.2H7.75" stroke="#6a6a6a" stroke-width="0.9"/></svg>
<svg style="left:287px;top:74.1px;" width="9.5" height="12.6" viewBox="0 0 9.5 12.6"><path d="M0 0.5H9.5" stroke="#6a6a6a" stroke-width="0.9"/><path d="M3.5 3.4H9.5" stroke="#6a6a6a" stroke-width="0.9"/><path d="M0 6.3H9.5" stroke="#6a6a6a" stroke-width="0.9"/><path d="M3.5 9.2H9.5" stroke="#6a6a6a" stroke-width="0.9"/></svg>
<div style="left:301.1px;top:74.5px;width:0.8px;height:11.5px;background:#d2d0ce;"></div>
<svg style="left:306px;top:74.1px;" width="10" height="10.5" viewBox="0 0 10 10.5"><path d="M0 0.5H10M4.6 3.4H10M4.6 6.3H10M0 9.2H10" stroke="#6a6a6a" stroke-width="0.9"/><path d="M3.8 4.85H0.6M2 3.5L0.5 4.85L2 6.2" stroke="#2b7cd3" stroke-width="0.95" fill="none"/></svg>
<svg style="left:321px;top:74.1px;" width="10" height="10.5" viewBox="0 0 10 10.5"><path d="M0 0.5H10M4.6 3.4H10M4.6 6.3H10M0 9.2H10" stroke="#6a6a6a" stroke-width="0.9"/><path d="M0.4 4.85H3.6M2.2 3.5L3.7 4.85L2.2 6.2" stroke="#2b7cd3" stroke-width="0.95" fill="none"/></svg>
<svg style="left:340.9px;top:73.8px;" width="10.5" height="10.5" viewBox="0 0 10.5 10.5"><rect x="0.45" y="0.45" width="9.5" height="9.5" fill="#fff" stroke="#555" stroke-width="0.9"/><path d="M3.6 0.5V2.4M6.8 0.5V2.4M3.6 8V10M6.8 8V10" stroke="#666" stroke-width="0.7"/><path d="M0.9 2.6H9.5M0.9 7.8H9.5" stroke="#2b7cd3" stroke-width="0.8"/><path d="M2 5.2H8.4M3 4.2L2 5.2L3 6.2M7.4 4.2L8.4 5.2L7.4 6.2" stroke="#2b7cd3" stroke-width="0.85" fill="none"/></svg>
<div class="t" style="top:73.8px;height:13px;line-height:13px;font-size:9px;color:#3b3b3b;left:353.75px;transform-origin:0 50%;transform:scaleX(0.8776);">Merge &amp; Center</div>
<svg style="left:415.2px;top:79.5px;" width="3.6" height="2" viewBox="0 0 3.6 2"><path d="M0 0H3.6L1.8 2Z" fill="#555"/></svg>
<div style="left:432.5px;top:51.9px;width:87px;height:14.7px;background:#fff;border:0.75px solid #e1dfdd;"></div>
<div class="t" style="top:53.8px;height:13px;line-height:13px;font-size:9px;color:#3b3b3b;left:434px;transform-origin:0 50%;transform:scaleX(0.8472);">Percentage</div>
<svg style="left:513.2px;top:58.8px;" width="3.6" height="2" viewBox="0 0 3.6 2"><path d="M0 0H3.6L1.8 2Z" fill="#555"/></svg>
<div class="t" style="top:72px;height:16px;line-height:16px;font-size:11.4px;color:#444;left:436.5px;transform-origin:0 50%;transform:scaleX(0.8517);">$</div>
<svg style="left:448.7px;top:79.5px;" width="3.6" height="2" viewBox="0 0 3.6 2"><path d="M0 0H3.6L1.8 2Z" fill="#555"/></svg>
<div class="t" style="top:71px;height:18px;line-height:18px;font-size:12.8px;color:#444;left:457.3px;transform-origin:0 50%;transform:scaleX(0.8699);">%</div>
<svg style="left:475px;top:75.5px;" width="5.5" height="8.5" viewBox="0 0 5.5 8.5"><path d="M3 0.4A2.2 2.2 0 1 0 3.2 4.8C3.2 6.4 2.2 7.4 0.8 8C3.4 7.6 5.2 5.6 5.2 2.8A2.3 2.3 0 0 0 3 0.4Z" fill="#333"/></svg>
<div style="left:487.1px;top:74.5px;width:0.8px;height:11.5px;background:#d2d0ce;"></div>
<svg style="left:492px;top:75px;" width="10.5" height="10" viewBox="0 0 10.5 10"><path d="M5 2.4H0.8M2 1.2L0.6 2.4L2 3.6" stroke="#2b7cd3" stroke-width="0.9" fill="none"/></svg>
<div class="t" style="top:73.9px;height:7px;line-height:7px;font-size:5.2px;color:#555;left:497.5px;transform-origin:0 50%;transform:scaleX(1.7289);">0</div>
<div class="t" style="top:79.5px;height:7px;line-height:7px;font-size:5.2px;color:#555;left:492.5px;transform-origin:0 50%;transform:scaleX(1.3834);">.00</div>
<svg style="left:507px;top:75px;" width="10.5" height="10" viewBox="0 0 10.5 10"><path d="M0.6 7.6H4.6M3.4 6.4L4.8 7.6L3.4 8.8" stroke="#2b7cd3" stroke-width="0.9" fill="none"/></svg>
<div class="t" style="top:73.9px;height:7px;line-height:7px;font-size:5.2px;color:#555;left:510px;transform-origin:0 50%;transform:scaleX(1.0375);">.00</div>
<div class="t" style="top:79.5px;height:7px;line-height:7px;font-size:5.2px;color:#555;left:513px;transform-origin:0 50%;transform:scaleX(1.0377);">.0</div>
<svg style="left:544px;top:50px;" width="19.5" height="15.5" viewBox="0 0 19.5 15.5"><rect x="0.5" y="0.5" width="18.3" height="14.3" fill="#fff" stroke="#666" stroke-width="0.8"/><path d="M0.5 5.2H18.8M0.5 10H18.8M3.2 0.5V14.8M11.6 0.5V14.8M15.2 0.5V14.8" stroke="#777" stroke-width="0.6"/><rect x="3.4" y="1" width="8.2" height="3.8" fill="#f4858e" stroke="#e8505b" stroke-width="0.5"/><rect x="3.4" y="5.7" width="5.4" height="3.8" fill="#5b9bd5" stroke="#2b7cd3" stroke-width="0.5"/><rect x="3.4" y="10.5" width="10.4" height="3.8" fill="#f4858e" stroke="#e8505b" stroke-width="0.5"/></svg>
<div class="t" style="top:68.7px;height:13px;line-height:13px;font-size:9px;color:#3b3b3b;left:533px;transform-origin:0 50%;transform:scaleX(0.8938);">Conditional</div>
<div class="t" style="top:79.5px;height:13px;line-height:13px;font-size:9px;color:#3b3b3b;left:531px;transform-origin:0 50%;transform:scaleX(0.8951);">Formatting</div>
<svg style="left:571.4px;top:84.8px;" width="3.6" height="2" viewBox="0 0 3.6 2"><path d="M0 0H3.6L1.8 2Z" fill="#555"/></svg>
<svg style="left:586px;top:50px;" width="18" height="15.5" viewBox="0 0 18 15.5"><rect x="0.5" y="0.5" width="17" height="14.5" fill="#fff" stroke="#666" stroke-width="0.8"/><path d="M0.5 5.3H17.5M0.5 10.2H17.5M6.2 0.5V15M11.8 0.5V15" stroke="#666" stroke-width="0.7"/><rect x="6.6" y="5.7" width="10.6" height="9" fill="#2b7cd3" opacity="0.85"/></svg>
<svg style="left:595px;top:54.5px;" width="11" height="13" viewBox="0 0 11 13"><path d="M9.6 0.6L10.4 1.4L5.6 8.2L4 7Z" fill="#fff" stroke="#555" stroke-width="0.7"/><path d="M4 7L5.6 8.4C5.4 10.6 3.2 12.4 0.6 11.8C1.8 11 1.6 8 4 7Z" fill="#2b7cd3"/></svg>
<div class="t" style="top:68.7px;height:13px;line-height:13px;font-size:9px;color:#3b3b3b;left:578.5px;transform-origin:0 50%;transform:scaleX(0.8393);">Format as</div>
<div class="t" style="top:79.5px;height:13px;line-height:13px;font-size:9px;color:#3b3b3b;left:584px;transform-origin:0 50%;transform:scaleX(0.8598);">Table</div>
<svg style="left:604.2px;top:84.8px;" width="3.6" height="2" viewBox="0 0 3.6 2"><path d="M0 0H3.6L1.8 2Z" fill="#555"/></svg>
<svg style="left:619px;top:50.2px;" width="19" height="15" viewBox="0 0 19 15"><rect x="0.45" y="0.45" width="17.8" height="13.7" fill="#fff" stroke="#666" stroke-width="0.8"/><path d="M3 0.5V14M15.6 0.5V14M0.5 3.4H18.2M0.5 11.6H18.2" stroke="#888" stroke-width="0.6"/><rect x="3.2" y="3.6" width="12.2" height="7.8" fill="#5fa2e0"/></svg>
<svg style="left:627.5px;top:54.6px;" width="11" height="13" viewBox="0 0 11 13"><path d="M9.6 0.6L10.4 1.4L5.6 8.2L4 7Z" fill="#fff" stroke="#555" stroke-width="0.7"/><path d="M4 7L5.6 8.4C5.4 10.6 3.2 12.4 0.6 11.8C1.8 11 1.6 8 4 7Z" fill="#2b7cd3"/></svg>
<div class="t" style="top:68.7px;height:13px;line-height:13px;font-size:9px;color:#3b3b3b;left:622px;transform-origin:0 50%;transform:scaleX(0.8062);">Cell</div>
<div class="t" style="top:79.5px;height:13px;line-height:13px;font-size:9px;color:#3b3b3b;left:616px;transform-origin:0 50%;transform:scaleX(0.7956);">Styles</div>
<svg style="left:637.2px;top:84.8px;" width="3.6" height="2" viewBox="0 0 3.6 2"><path d="M0 0H3.6L1.8 2Z" fill="#555"/></svg>
<svg style="left:655.2px;top:50.2px;" width="23" height="15" viewBox="0 0 23 15"><g transform="translate(1.9,0)"><rect x="0.5" y="0.5" width="18" height="13.6" fill="#fff" stroke="#666" stroke-width="0.8"/><path d="M0.5 5.066666666666666H18.5M0.5 9.533333333333333H18.5M6.333333333333333 0.5V14.1M12.666666666666666 0.5V14.1" stroke="#666" stroke-width="0.7"/></g><rect x="6" y="5.2" width="16.4" height="4.2" fill="#5fa2e0"/><path d="M0.4 7.3L4.4 3.6V5.6H8.6V9H4.4V11Z" fill="#fff" stroke="#2b7cd3" stroke-width="0.8"/></svg>
<div class="t" style="top:68.7px;height:13px;line-height:13px;font-size:9px;color:#3b3b3b;left:657.5px;transform-origin:0 50%;transform:scaleX(0.8330);">Insert</div>
<svg style="left:665.2px;top:84.8px;" width="3.6" height="2" viewBox="0 0 3.6 2"><path d="M0 0H3.6L1.8 2Z" fill="#555"/></svg>
<svg style="left:684.1px;top:50.2px;" width="21" height="15" viewBox="0 0 21 15"><g><rect x="0.5" y="0.5" width="17.8" height="13.6" fill="#fff" stroke="#666" stroke-width="0.8"/><path d="M0.5 5.066666666666666H18.3M0.5 9.533333333333333H18.3M6.266666666666667 0.5V14.1M12.533333333333333 0.5V14.1" stroke="#666" stroke-width="0.7"/></g><rect x="2.6" y="5.2" width="9.6" height="4.2" fill="#5fa2e0"/><path d="M12.2 3.8L19.2 10.8M19.2 3.8L12.2 10.8" stroke="#ef6a5a" stroke-width="1"/></svg>
<div class="t" style="top:68.7px;height:13px;line-height:13px;font-size:9px;color:#3b3b3b;left:682px;transform-origin:0 50%;transform:scaleX(0.8841);">Delete</div>
<svg style="left:691.2px;top:84.8px;" width="3.6" height="2" viewBox="0 0 3.6 2"><path d="M0 0H3.6L1.8 2Z" fill="#555"/></svg>
<svg style="left:711.2px;top:47.2px;" width="19.5" height="18" viewBox="0 0 19.5 18"><path d="M4 0.6H14.8" stroke="#2b7cd3" stroke-width="1"/><g transform="translate(0,3)"><rect x="0.5" y="0.5" width="17.8" height="13.6" fill="#fff" stroke="#666" stroke-width="0.8"/><path d="M0.5 5.066666666666666H18.3M0.5 9.533333333333333H18.3M6.266666666666667 0.5V14.1M12.533333333333333 0.5V14.1" stroke="#666" stroke-width="0.7"/></g><rect x="5" y="8.2" width="8.8" height="4.2" fill="#5fa2e0"/></svg>
<div class="t" style="top:68.7px;height:13px;line-height:13px;font-size:9px;color:#3b3b3b;left:708px;transform-origin:0 50%;transform:scaleX(0.8771);">Format</div>
<svg style="left:718.2px;top:84.8px;" width="3.6" height="2" viewBox="0 0 3.6 2"><path d="M0 0H3.6L1.8 2Z" fill="#555"/></svg>
<svg style="left:748px;top:47.5px;" width="9.5" height="10.5" viewBox="0 0 9.5 10.5"><path d="M8.8 2.4V0.6H0.8L5 5.2L0.8 9.8H8.8V8" fill="none" stroke="#555" stroke-width="0.9"/></svg>
<div class="t" style="top:46.1px;height:13px;line-height:13px;font-size:9px;color:#3b3b3b;left:760px;transform-origin:0 50%;transform:scaleX(0.8644);">AutoSum</div>
<svg style="left:797.2px;top:52px;" width="3.6" height="2" viewBox="0 0 3.6 2"><path d="M0 0H3.6L1.8 2Z" fill="#555"/></svg>
<svg style="left:747px;top:62px;" width="11.5" height="10.5" viewBox="0 0 11.5 10.5"><rect x="0.5" y="0.5" width="10.5" height="9.5" fill="#fff" stroke="#555" stroke-width="0.8"/><path d="M0.5 2.6H11" stroke="#555" stroke-width="0.8"/><path d="M5.75 3.6V8M4 6.4L5.75 8.2L7.5 6.4" stroke="#2b7cd3" stroke-width="0.9" fill="none"/></svg>
<div class="t" style="top:60.7px;height:13px;line-height:13px;font-size:9px;color:#3b3b3b;left:760px;transform-origin:0 50%;transform:scaleX(0.8264);">Fill</div>
<svg style="left:771.2px;top:66.6px;" width="3.6" height="2" viewBox="0 0 3.6 2"><path d="M0 0H3.6L1.8 2Z" fill="#555"/></svg>
<svg style="left:747.5px;top:76.5px;" width="10.5" height="10" viewBox="0 0 10.5 10"><path d="M0.6 6.4L5.6 0.8L9.8 4.2L5 9.4H2.8Z" fill="#fff" stroke="#b04fc0" stroke-width="0.9"/><path d="M0.6 6.4L3.4 3.4L7.4 6.8L5 9.4H2.8Z" fill="#c76dd4"/></svg>
<div class="t" style="top:75.1px;height:13px;line-height:13px;font-size:9px;color:#3b3b3b;left:760px;transform-origin:0 50%;transform:scaleX(0.8137);">Clear</div>
<svg style="left:779.2px;top:81px;" width="3.6" height="2" viewBox="0 0 3.6 2"><path d="M0 0H3.6L1.8 2Z" fill="#555"/></svg>
<div class="t" style="top:46.4px;height:14px;line-height:14px;font-size:9.8px;color:#3a86d8;left:807px;transform-origin:0 50%;transform:scaleX(1.1015);">A</div>
<div class="t" style="top:55.8px;height:14px;line-height:14px;font-size:9.8px;color:#444;left:807px;transform-origin:0 50%;transform:scaleX(1.1693);">Z</div>
<svg style="left:815.5px;top:52.5px;" width="12" height="11" viewBox="0 0 12 11"><path d="M0.6 0.6H11.4L7.2 5.2V10L4.8 8.4V5.2Z" fill="none" stroke="#555" stroke-width="0.9"/></svg>
<div class="t" style="top:68.7px;height:13px;line-height:13px;font-size:9px;color:#3b3b3b;left:806px;transform-origin:0 50%;transform:scaleX(0.8797);">Sort &amp;</div>
<div class="t" style="top:79.5px;height:13px;line-height:13px;font-size:9px;color:#3b3b3b;left:806px;transform-origin:0 50%;transform:scaleX(0.8500);">Filter</div>
<svg style="left:825.2px;top:84.8px;" width="3.6" height="2" viewBox="0 0 3.6 2"><path d="M0 0H3.6L1.8 2Z" fill="#555"/></svg>
<svg style="left:835px;top:48.5px;" width="20" height="19" viewBox="0 0 20 19"><circle cx="12.2" cy="7.2" r="6.6" fill="none" stroke="#555" stroke-width="0.9"/><path d="M7.6 12L0.6 18.4" stroke="#555" stroke-width="1"/></svg>
<div class="t" style="top:68.7px;height:13px;line-height:13px;font-size:9px;color:#3b3b3b;left:833px;transform-origin:0 50%;transform:scaleX(0.8842);">Find &amp;</div>
<div class="t" style="top:79.5px;height:13px;line-height:13px;font-size:9px;color:#3b3b3b;left:832px;transform-origin:0 50%;transform:scaleX(0.8795);">Select</div>
<svg style="left:855.7px;top:84.8px;" width="3.6" height="2" viewBox="0 0 3.6 2"><path d="M0 0H3.6L1.8 2Z" fill="#555"/></svg>
<svg style="left:876px;top:48.5px;" width="15.5" height="19" viewBox="0 0 15.5 19"><path d="M6.2 0.6H13.4L9.4 7H14.4L3.4 18.4L6.4 10H1.6Z" fill="#6db0ee" stroke="#2b7cd3" stroke-width="0.8"/></svg>
<div class="t" style="top:68.7px;height:13px;line-height:13px;font-size:9px;color:#3b3b3b;left:874px;transform-origin:0 50%;transform:scaleX(0.8403);">Ideas</div>
<div style="left:3.5px;top:113.5px;width:67.25px;height:15px;background:#fff;"></div>
<div class="t" style="top:114.8px;height:13px;line-height:13px;font-size:9px;color:#444;left:7px;transform-origin:0 50%;transform:scaleX(0.8630);">X4</div>
<svg style="left:62.3px;top:120.3px;" width="3.8" height="2" viewBox="0 0 3.8 2"><path d="M0 0H3.8L1.9 2Z" fill="#555"/></svg>
<div style="left:80.2px;top:117.5px;width:1px;height:1.2px;background:#9a9a9a;"></div>
<div style="left:80.2px;top:120.5px;width:1px;height:1.2px;background:#9a9a9a;"></div>
<div style="left:80.2px;top:123.5px;width:1px;height:1.2px;background:#9a9a9a;"></div>
<div style="left:90.75px;top:113.5px;width:72.5px;height:15px;background:#fff;"></div>
<svg style="left:98.5px;top:117px;" width="8.5" height="8.5" viewBox="0 0 8.5 8.5"><path d="M0.6 0.6L7.9 7.9M7.9 0.6L0.6 7.9" stroke="#c4c4c4" stroke-width="0.9"/></svg>
<svg style="left:122px;top:117px;" width="10" height="8.5" viewBox="0 0 10 8.5"><path d="M0.6 4.6L3.6 7.8L9.4 0.6" fill="none" stroke="#c4c4c4" stroke-width="0.9"/></svg>
<div class="t" style="top:113.5px;height:15px;line-height:15px;font-size:11px;color:#555;font-style:italic;font-family:'Liberation Serif',serif;left:146.5px;transform-origin:0 50%;transform:scaleX(1.4725);">f</div>
<div class="t" style="top:117.6px;height:10px;line-height:10px;font-size:7.5px;color:#555;font-style:italic;font-family:'Liberation Serif',serif;left:150.6px;transform-origin:0 50%;transform:scaleX(1.3218);">x</div>
<div style="left:165.25px;top:113.5px;width:855.25px;height:27.75px;background:#fff;"></div>
<div class="t" style="top:115px;height:13px;line-height:13px;font-size:9px;color:#444;left:172.75px;transform-origin:0 50%;transform:scaleX(0.9552);">28.5342354291776%</div>
<svg style="left:1012.8px;top:119.2px;" width="5" height="3.4" viewBox="0 0 5 3.4"><path d="M0.5 3L2.5 0.8L4.5 3" fill="none" stroke="#555" stroke-width="1.1"/></svg>
<div style="left:0px;top:544.5px;width:777px;height:1.2px;background:#ababab;"></div>
<div style="left:0px;top:545.7px;width:777px;height:14.8px;background:#e6e6e6;"></div>
<div style="left:0px;top:560.5px;width:1024px;height:15.5px;background:#f3f2f1;"></div>
<div style="left:0px;top:560px;width:790px;height:0.9px;background:#c8c8c8;"></div>
<svg style="left:14.8px;top:548.8px;" width="3.4" height="5.6" viewBox="0 0 3.4 5.6"><path d="M3 0.4L0.6 2.8L3 5.2Z" fill="#c0c0c0"/></svg>
<svg style="left:29.6px;top:548.8px;" width="3.4" height="5.6" viewBox="0 0 3.4 5.6"><path d="M0.4 0.4L2.8 2.8L0.4 5.2Z" fill="#c0c0c0"/></svg>
<div style="left:54.6px;top:547.5px;width:0.9px;height:10px;background:#b9b9b9;"></div>
<div style="left:88.1px;top:547.5px;width:0.9px;height:10px;background:#b9b9b9;"></div>
<div style="left:222.6px;top:547.5px;width:0.9px;height:10px;background:#b9b9b9;"></div>
<div class="t" style="top:544.3px;height:13px;line-height:13px;font-size:9.6px;color:#444;left:62px;transform-origin:0 50%;transform:scaleX(0.9123);">Data</div>
<div class="t" style="top:544.3px;height:13px;line-height:13px;font-size:9.6px;color:#444;left:95px;transform-origin:0 50%;transform:scaleX(0.8874);">Sheet1</div>
<div style="left:130px;top:545.7px;width:35.25px;height:13.1px;background:#fff;border-left:0.8px solid #cfcfcf;border-right:0.8px solid #cfcfcf;"></div>
<div style="left:130px;top:557.6px;width:35.25px;height:1.2px;background:#2a7a4d;"></div>
<div class="t" style="top:544.3px;height:13px;line-height:13px;font-size:9.6px;color:#217346;font-weight:bold;left:136.5px;transform-origin:0 50%;transform:scaleX(0.9267);">Pivot</div>
<div class="t" style="top:544.3px;height:13px;line-height:13px;font-size:9.6px;color:#444;left:172.5px;transform-origin:0 50%;transform:scaleX(0.9316);">Dashboard</div>
<svg style="left:240.5px;top:546.75px;" width="12" height="12" viewBox="0 0 12 12"><circle cx="6" cy="6" r="5.2" fill="none" stroke="#777" stroke-width="0.9"/><path d="M3.4 6H8.6M6 3.4V8.6" stroke="#777" stroke-width="1"/></svg>
<div style="left:473px;top:548.6px;width:1.1px;height:1.2px;background:#9a9a9a;"></div>
<div style="left:473px;top:551.6px;width:1.1px;height:1.2px;background:#9a9a9a;"></div>
<div style="left:473px;top:554.6px;width:1.1px;height:1.2px;background:#9a9a9a;"></div>
<div style="left:482.5px;top:547.75px;width:294.5px;height:9.75px;background:#d3d3d3;"></div>
<div style="left:482.5px;top:547.75px;width:10px;height:9.75px;background:#fff;border:0.75px solid #c0c0c0;"></div>
<svg style="left:485.8px;top:550.2px;" width="3.6" height="5" viewBox="0 0 3.6 5"><path d="M3.2 0.3L0.4 2.5L3.2 4.7Z" fill="#444"/></svg>
<div style="left:653px;top:548px;width:113.5px;height:9.5px;background:#fff;border:0.75px solid #c6c6c6;"></div>
<div style="left:766.5px;top:547.75px;width:10.5px;height:9.75px;background:#f2f2f2;border:0.75px solid #d0d0d0;"></div>
<svg style="left:770.4px;top:550.2px;" width="3.6" height="5" viewBox="0 0 3.6 5"><path d="M0.4 0.3L3.2 2.5L0.4 4.7Z" fill="#444"/></svg>
<div style="left:778.75px;top:148px;width:10px;height:397.5px;background:#d3d3d3;"></div>
<div style="left:778.75px;top:159px;width:9.75px;height:206px;background:#fff;border:0.75px solid #d6d6d6;"></div>
<div style="left:778.75px;top:149.25px;width:10px;height:10px;background:#fff;border:0.75px solid #c6c6c6;"></div>
<svg style="left:781.4px;top:152.8px;" width="4.8" height="3" viewBox="0 0 4.8 3"><path d="M0.3 2.7L2.4 0.3L4.5 2.7Z" fill="#444"/></svg>
<div style="left:778.75px;top:535.25px;width:10px;height:10px;background:#fff;border:0.75px solid #c6c6c6;"></div>
<svg style="left:781.4px;top:539px;" width="4.8" height="3" viewBox="0 0 4.8 3"><path d="M0.3 0.3L2.4 2.7L4.5 0.3Z" fill="#444"/></svg>
<div style="left:845.4px;top:560.75px;width:21.3px;height:15.25px;background:#c8c6c4;"></div>
<svg style="left:851.5px;top:563.8px;" width="9.4" height="8.6" viewBox="0 0 9.4 8.6"><rect x="0.45" y="0.45" width="8.5" height="7.7" fill="none" stroke="#555" stroke-width="0.8"/><path d="M3.3 0.4V8.2M6.1 0.4V8.2M0.4 3V3M0.4 3.1H9M0.4 5.6H9" stroke="#555" stroke-width="0.7"/></svg>
<svg style="left:873.5px;top:563.8px;" width="9.6" height="8.6" viewBox="0 0 9.6 8.6"><rect x="0.45" y="0.45" width="8.7" height="7.7" fill="none" stroke="#666" stroke-width="0.8"/><rect x="2.4" y="2" width="4.8" height="4.6" fill="none" stroke="#666" stroke-width="0.7"/></svg>
<svg style="left:896px;top:563.8px;" width="9.4" height="8.6" viewBox="0 0 9.4 8.6"><rect x="0.45" y="0.45" width="8.5" height="7.7" fill="none" stroke="#666" stroke-width="0.8"/><path d="M0.4 5.2H9M4.7 0.4V5.2" fill="none" stroke="#666" stroke-width="0.8"/></svg>
<div style="left:914.8px;top:567.3px;width:5.2px;height:1.1px;background:#444;"></div>
<div style="left:922.3px;top:567.5px;width:66.1px;height:0.8px;background:#adadad;"></div>
<div style="left:957px;top:563.8px;width:3px;height:8.4px;background:#686868;"></div>
<div style="left:990.7px;top:567.3px;width:5.4px;height:1.1px;background:#444;"></div>
<div style="left:992.85px;top:565.2px;width:1.1px;height:5.4px;background:#444;"></div>
<div class="t" style="top:562.5px;height:11px;line-height:11px;font-size:7.6px;color:#444;left:1003px;transform-origin:0 50%;transform:scaleX(0.8231);">130%</div>
<div style="left:789.5px;top:148px;width:234.5px;height:412px;background:#e6e6e6;"></div>
<div style="left:789.8px;top:148px;width:0.9px;height:412px;background:#c6c6c6;"></div>
<div class="t" style="top:154px;height:20px;line-height:20px;font-size:14.6px;color:#2d7b51;left:798.8px;transform-origin:0 50%;transform:scaleX(0.9278);">PivotTable Fields</div>
<svg style="left:978.7px;top:161px;" width="5.8" height="3.2" viewBox="0 0 5.8 3.2"><path d="M0 0H5.8L2.9 3.2Z" fill="#555"/></svg>
<svg style="left:1005.8px;top:159.6px;" width="6.6" height="6.4" viewBox="0 0 6.6 6.4"><path d="M0.5 0.5L6.1 5.9M6.1 0.5L0.5 5.9" stroke="#4a4a4a" stroke-width="1.05"/></svg>
<div class="t" style="top:179.5px;height:12px;line-height:12px;font-size:8.8px;color:#444;left:798.8px;transform-origin:0 50%;transform:scaleX(0.9220);">Choose fields to add to report:</div>
<div style="left:989.2px;top:177.1px;width:27.6px;height:16.4px;background:#fff;border:0.75px solid #cfcfcf;"></div>
<svg style="left:993.8px;top:179.9px;" width="10.6" height="10.6" viewBox="0 0 10 10"><path d="M4.2 0.5H5.8L6.1 1.8L7.2 2.4L8.5 2L9.3 3.4L8.3 4.3V5.7L9.3 6.6L8.5 8L7.2 7.6L6.1 8.2L5.8 9.5H4.2L3.9 8.2L2.8 7.6L1.5 8L0.7 6.6L1.7 5.7V4.3L0.7 3.4L1.5 2L2.8 2.4L3.9 1.8Z" fill="none" stroke="#4a4a4a" stroke-width="0.9"/><circle cx="5" cy="5" r="1.5" fill="none" stroke="#4a4a4a" stroke-width="0.9"/></svg>
<svg style="left:1009px;top:183.65px;" width="4.8" height="2.7" viewBox="0 0 4.8 2.7"><path d="M0 0H4.8L2.4 2.7Z" fill="#555"/></svg>
<div style="left:798px;top:201.4px;width:218.7px;height:12.2px;background:#fff;border:0.75px solid #c2c2c2;"></div>
<div class="t" style="top:201.6px;height:12px;line-height:12px;font-size:8.8px;color:#777;left:799.7px;transform-origin:0 50%;transform:scaleX(0.8249);">Search</div>
<svg style="left:1006px;top:202.6px;" width="10" height="10" viewBox="0 0 10 10"><circle cx="6" cy="3.9" r="3.2" fill="none" stroke="#555" stroke-width="0.9"/><path d="M3.8 6.3L0.5 9.6" stroke="#555" stroke-width="0.9"/></svg>
<div style="left:798px;top:223.2px;width:218.7px;height:132.7px;background:#fff;"></div>
<div style="left:1006px;top:223.2px;width:10.7px;height:132.7px;background:#f0f0f0;"></div>
<div style="left:1006.2px;top:224.4px;width:10.2px;height:9.8px;background:#fff;border:0.75px solid #c8c8c8;"></div>
<svg style="left:1009px;top:228px;" width="4.6" height="2.8" viewBox="0 0 4.6 2.8"><path d="M0.3 2.5L2.3 0.3L4.3 2.5Z" fill="#555"/></svg>
<div style="left:1006.2px;top:345.4px;width:10.2px;height:9.4px;background:#fff;border:0.75px solid #c8c8c8;"></div>
<svg style="left:1009px;top:348.8px;" width="4.6" height="2.8" viewBox="0 0 4.6 2.8"><path d="M0.3 0.3L2.3 2.5L4.3 0.3Z" fill="#555"/></svg>
<div style="left:1006.2px;top:288px;width:10.2px;height:52px;background:#fff;border:0.75px solid #c0c0c0;"></div>
<div style="left:798px;top:223.2px;width:208px;height:132.7px;overflow:hidden;">
<div style="left:1.5px;top:-3px;width:8.6px;height:8.6px;background:#fff;border:0.75px solid #a6a6a6;"></div>
<div style="left:1.5px;top:10.35px;width:8.6px;height:8.6px;background:#fff;border:0.75px solid #a6a6a6;"></div>
<div style="left:1.5px;top:23.7px;width:8.6px;height:8.6px;background:#fff;border:0.75px solid #a6a6a6;"></div>
<div style="left:1.5px;top:37.05px;width:8.6px;height:8.6px;background:#fff;border:0.75px solid #a6a6a6;"></div>
<div style="left:1.5px;top:50.4px;width:8.6px;height:8.6px;background:#fff;border:0.75px solid #a6a6a6;"></div>
<div style="left:1.5px;top:63.75px;width:8.6px;height:8.6px;background:#fff;border:0.75px solid #a6a6a6;"></div>
<div style="left:1.5px;top:77.1px;width:8.6px;height:8.6px;background:#fff;border:0.75px solid #a6a6a6;"></div>
<div style="left:1.5px;top:90.45px;width:8.6px;height:8.6px;background:#fff;border:0.75px solid #a6a6a6;"></div>
<svg style="left:3px;top:91.85px" width="6.4" height="5.6" viewBox="0 0 6.4 5.6"><path d="M0.5 2.9L2.3 4.8L5.9 0.5" fill="none" stroke="#555" stroke-width="0.8"/></svg>
<div style="left:1.5px;top:103.8px;width:8.6px;height:8.6px;background:#fff;border:0.75px solid #a6a6a6;"></div>
<svg style="left:3px;top:105.2px" width="6.4" height="5.6" viewBox="0 0 6.4 5.6"><path d="M0.5 2.9L2.3 4.8L5.9 0.5" fill="none" stroke="#555" stroke-width="0.8"/></svg>
<div style="left:1.5px;top:117.15px;width:8.6px;height:8.6px;background:#fff;border:0.75px solid #a6a6a6;"></div>
<svg style="left:3px;top:118.55px" width="6.4" height="5.6" viewBox="0 0 6.4 5.6"><path d="M0.5 2.9L2.3 4.8L5.9 0.5" fill="none" stroke="#555" stroke-width="0.8"/></svg>
</div>
<div style="left:798px;top:223.2px;width:208px;height:12px;overflow:hidden;">
<div class="t" style="left:13.4px;top:-3.9px;height:12px;line-height:12px;font-size:8.6px;color:#444;transform-origin:0 50%;transform:scaleX(0.8957);">Sub Category</div>
</div>
<div class="t" style="top:232.65px;height:12px;line-height:12px;font-size:8.6px;color:#444;left:811.4px;transform-origin:0 50%;transform:scaleX(0.9110);">Product</div>
<div class="t" style="top:246px;height:12px;line-height:12px;font-size:8.6px;color:#444;left:811.4px;transform-origin:0 50%;transform:scaleX(0.8552);">Frame Size</div>
<div class="t" style="top:259.35px;height:12px;line-height:12px;font-size:8.6px;color:#444;left:811.4px;transform-origin:0 50%;transform:scaleX(0.9273);">Order Quantity</div>
<div class="t" style="top:272.7px;height:12px;line-height:12px;font-size:8.6px;color:#444;left:811.4px;transform-origin:0 50%;transform:scaleX(0.8935);">Unit Cost</div>
<div class="t" style="top:286.05px;height:12px;line-height:12px;font-size:8.6px;color:#444;left:811.4px;transform-origin:0 50%;transform:scaleX(0.8880);">Unit Price</div>
<div class="t" style="top:299.4px;height:12px;line-height:12px;font-size:8.6px;color:#444;left:811.4px;transform-origin:0 50%;transform:scaleX(0.8596);">Cost</div>
<div class="t" style="top:312.75px;height:12px;line-height:12px;font-size:8.6px;color:#333;font-weight:bold;left:811.4px;transform-origin:0 50%;transform:scaleX(0.8815);">Revenue</div>
<div class="t" style="top:326.1px;height:12px;line-height:12px;font-size:8.6px;color:#333;font-weight:bold;left:811.4px;transform-origin:0 50%;transform:scaleX(0.9397);">Profit</div>
<div class="t" style="top:339.45px;height:12px;line-height:12px;font-size:8.6px;color:#333;font-weight:bold;left:811.4px;transform-origin:0 50%;transform:scaleX(0.9436);">Margin</div>
<div style="left:798px;top:365px;width:219px;height:0;border-top:0.9px dotted #cfcfcf;"></div>
<div class="t" style="top:367.2px;height:12px;line-height:12px;font-size:8.8px;color:#444;left:800.9px;transform-origin:0 50%;transform:scaleX(0.9023);">Drag fields between areas below:</div>
<svg style="left:802.6px;top:389.7px;" width="8" height="7.8" viewBox="0 0 8 7.8"><path d="M0.2 0.2H7.8L4.9 3.5V7.6L3.1 6.6V3.5Z" fill="#8a8a8a"/></svg>
<div class="t" style="top:387.8px;height:12px;line-height:12px;font-size:8.8px;color:#444;left:814.5px;transform-origin:0 50%;transform:scaleX(0.8558);">Filters</div>
<svg style="left:913px;top:390.6px;" width="6" height="6.6" viewBox="0 0 6 6.6"><rect x="0" y="0" width="1.6" height="6.6" fill="#9a9a9a"/><rect x="2.6" y="0" width="3.4" height="6.6" fill="#9a9a9a"/></svg>
<div class="t" style="top:387.8px;height:12px;line-height:12px;font-size:8.8px;color:#444;left:923.7px;transform-origin:0 50%;transform:scaleX(0.8726);">Columns</div>
<div style="left:907.1px;top:388px;width:0.9px;height:140px;background:#cfcfcf;"></div>
<div style="left:800px;top:456.5px;width:216.5px;height:0.9px;background:#cfcfcf;"></div>
<div style="left:800px;top:401.8px;width:104.2px;height:52.7px;background:#fff;"></div>
<div style="left:909.4px;top:401.8px;width:107.1px;height:52.7px;background:#fff;"></div>
<div style="left:800px;top:475.2px;width:104.2px;height:52.8px;background:#fff;"></div>
<div style="left:909.4px;top:475.2px;width:107.1px;height:52.8px;background:#fff;"></div>
<div style="left:800.9px;top:403.4px;width:102.3px;height:12.9px;background:#fff;border:0.75px solid #d6d6d6;"></div>
<div class="t" style="top:403.95px;height:12px;line-height:12px;font-size:8.8px;color:#444;left:805.6px;transform-origin:0 50%;transform:scaleX(0.8893);">Product Category</div>
<svg style="left:892.5px;top:408.6px;" width="5" height="2.7" viewBox="0 0 5 2.7"><path d="M0 0H5L2.5 2.7Z" fill="#555"/></svg>
<div style="left:910.3px;top:403.4px;width:105.3px;height:12.9px;background:#fff;border:0.75px solid #d6d6d6;"></div>
<svg style="left:915.2px;top:405.35px;" width="7" height="9.2" viewBox="0 0 7 9.2"><path d="M6.4 2V0.5H0.6L3.8 4.6L0.6 8.7H6.4V7.2" fill="none" stroke="#333" stroke-width="0.95"/></svg>
<div class="t" style="top:403.95px;height:12px;line-height:12px;font-size:8.8px;color:#444;left:926.5px;transform-origin:0 50%;transform:scaleX(0.8646);">Values</div>
<svg style="left:1004.9px;top:408.6px;" width="5" height="2.7" viewBox="0 0 5 2.7"><path d="M0 0H5L2.5 2.7Z" fill="#555"/></svg>
<div style="left:800.9px;top:476.8px;width:102.3px;height:12.8px;background:#fff;border:0.75px solid #d6d6d6;"></div>
<div class="t" style="top:477.3px;height:12px;line-height:12px;font-size:8.8px;color:#444;left:805.6px;transform-origin:0 50%;transform:scaleX(0.8730);">Country</div>
<svg style="left:892.5px;top:481.95px;" width="5" height="2.7" viewBox="0 0 5 2.7"><path d="M0 0H5L2.5 2.7Z" fill="#555"/></svg>
<div style="left:910.3px;top:476.8px;width:105.3px;height:12.8px;background:#fff;border:0.75px solid #d6d6d6;"></div>
<div class="t" style="top:477.3px;height:12px;line-height:12px;font-size:8.8px;color:#444;left:914.8px;transform-origin:0 50%;transform:scaleX(0.8650);">Sum of Revenue</div>
<svg style="left:1004.9px;top:481.95px;" width="5" height="2.7" viewBox="0 0 5 2.7"><path d="M0 0H5L2.5 2.7Z" fill="#555"/></svg>
<div style="left:910.3px;top:491.4px;width:105.3px;height:12.9px;background:#fff;border:0.75px solid #d6d6d6;"></div>
<div class="t" style="top:491.95px;height:12px;line-height:12px;font-size:8.8px;color:#444;left:914.8px;transform-origin:0 50%;transform:scaleX(0.9083);">Sum of Profit</div>
<svg style="left:1004.9px;top:496.6px;" width="5" height="2.7" viewBox="0 0 5 2.7"><path d="M0 0H5L2.5 2.7Z" fill="#555"/></svg>
<div style="left:910.3px;top:506.6px;width:105.3px;height:12.9px;background:#fff;border:0.75px solid #d6d6d6;"></div>
<div class="t" style="top:507.15px;height:12px;line-height:12px;font-size:8.8px;color:#444;left:914.8px;transform-origin:0 50%;transform:scaleX(0.9087);">Sum of Margin</div>
<svg style="left:1004.9px;top:511.8px;" width="5" height="2.7" viewBox="0 0 5 2.7"><path d="M0 0H5L2.5 2.7Z" fill="#555"/></svg>
<svg style="left:803.2px;top:463.6px;" width="6.2" height="6.4" viewBox="0 0 6.2 6.4"><rect x="0" y="0" width="6.2" height="2" fill="#9a9a9a"/><rect x="0" y="3" width="6.2" height="3.4" fill="#9a9a9a"/></svg>
<div class="t" style="top:461.6px;height:12px;line-height:12px;font-size:8.8px;color:#444;left:814.5px;transform-origin:0 50%;transform:scaleX(0.8271);">Rows</div>
<svg style="left:913px;top:462.8px;" width="6.4" height="8.4" viewBox="0 0 6.4 8.4"><path d="M5.8 1.8V0.5H0.6L3.4 4.2L0.6 7.9H5.8V6.6" fill="none" stroke="#777" stroke-width="0.8"/></svg>
<div class="t" style="top:461.6px;height:12px;line-height:12px;font-size:8.8px;color:#444;left:923.7px;transform-origin:0 50%;transform:scaleX(0.8646);">Values</div>
<div style="left:800.4px;top:543.4px;width:8.4px;height:8.4px;background:#fff;border:0.75px solid #8a8a8a;"></div>
<div class="t" style="top:541.5px;height:12px;line-height:12px;font-size:8.8px;color:#444;left:812.6px;transform-origin:0 50%;transform:scaleX(0.8977);">Defer Layout Update</div>
<div style="left:984.8px;top:539.9px;width:31.2px;height:14.5px;background:#fbfbfb;"></div>
<div class="t" style="top:541.3px;height:12px;line-height:12px;font-size:8.8px;color:#bdbdbd;left:987.4px;transform-origin:0 50%;transform:scaleX(0.9021);">Update</div>
</div></body></html>
